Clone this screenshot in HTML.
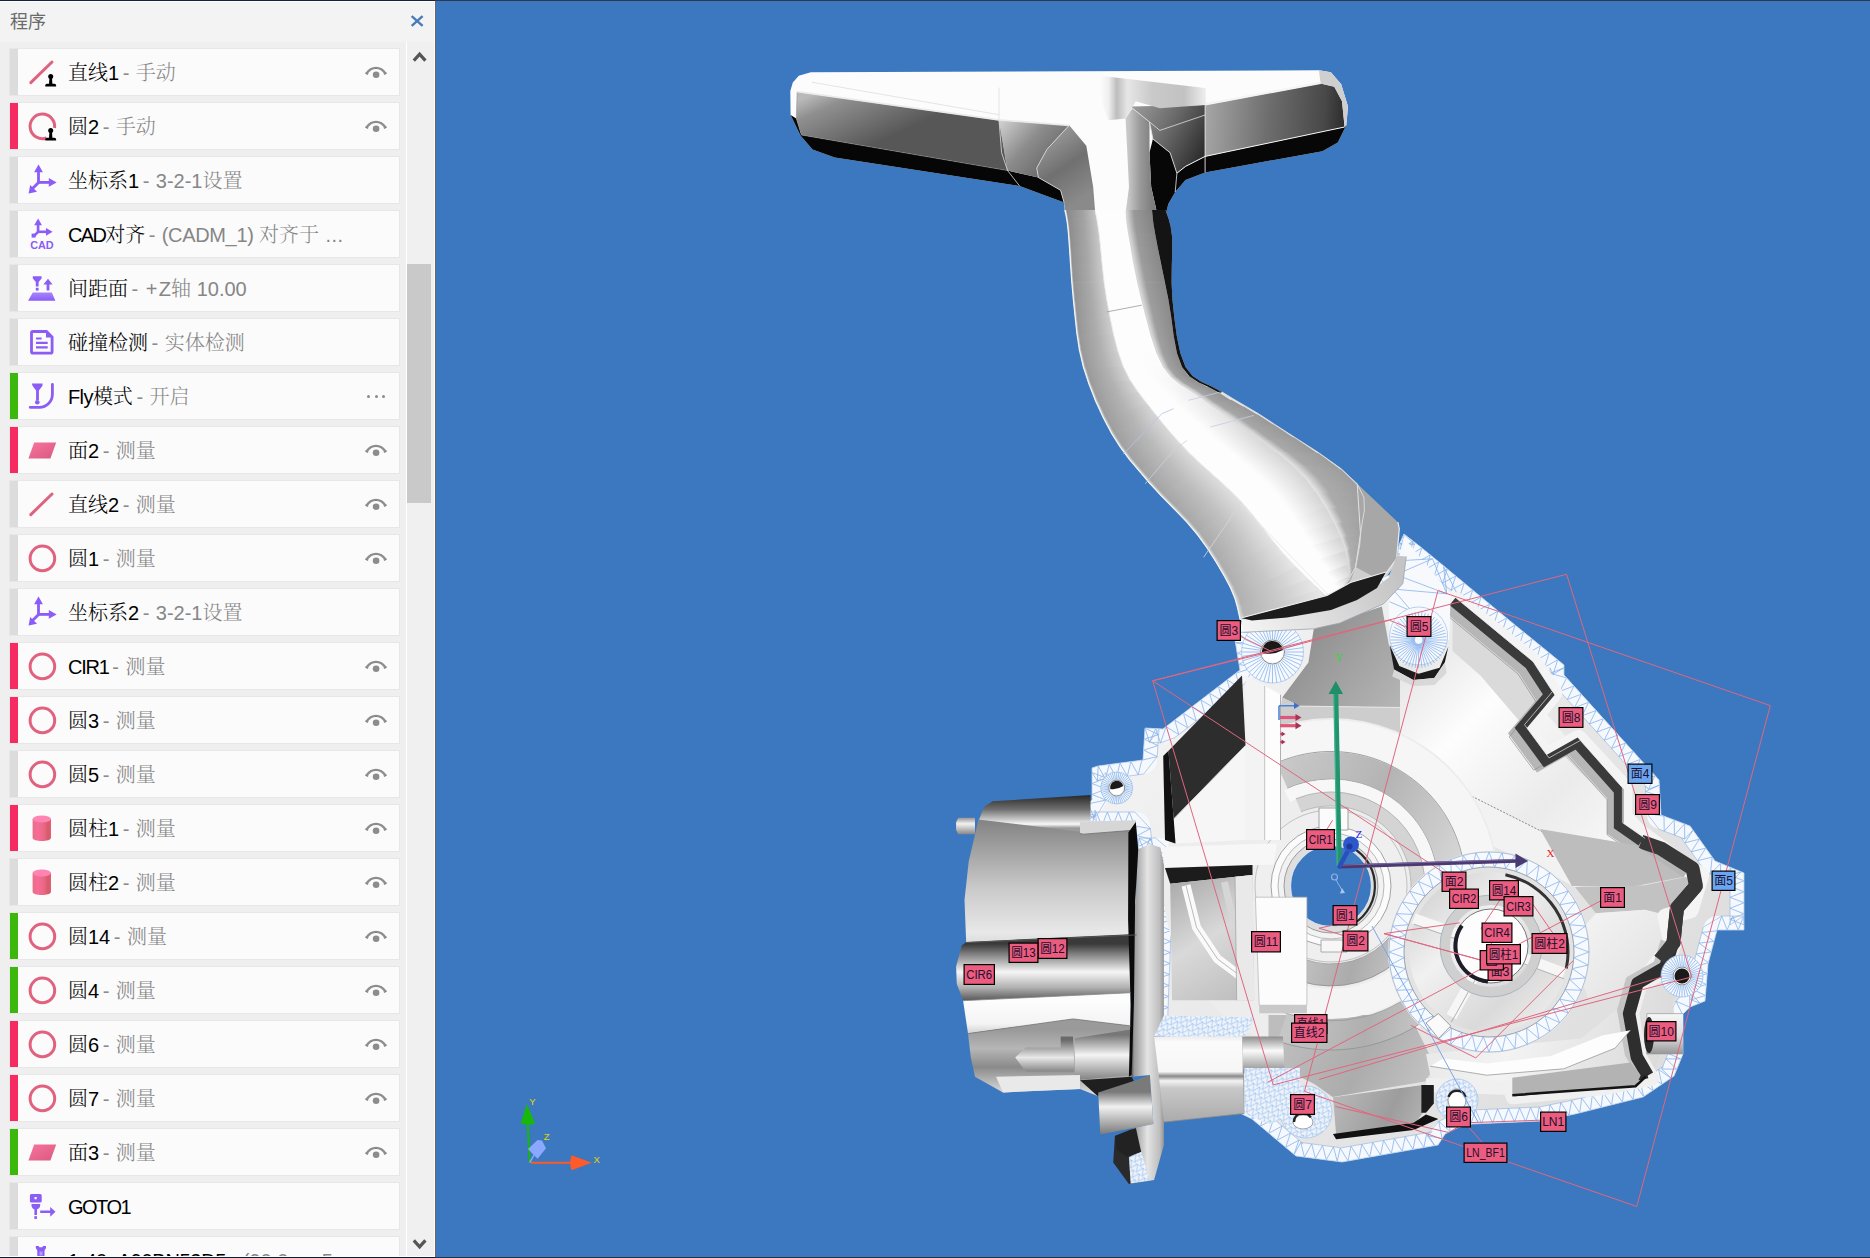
<!DOCTYPE html>
<html lang="zh-CN"><head><meta charset="utf-8"><title>程序</title>
<style>
html,body{margin:0;padding:0}
body{width:1870px;height:1258px;overflow:hidden;position:relative;background:#3b78bf;font-family:"Liberation Sans","Noto Serif CJK SC",sans-serif}
#panel{position:absolute;left:0;top:0;width:435px;height:1258px;background:#efefef;overflow:hidden}
#hdr{position:absolute;left:0;top:0;width:435px;height:42px;background:#f3f3f3}
#hdr .ttl{position:absolute;left:10px;top:9px;font:18px/26px "Liberation Sans","Noto Sans CJK SC",sans-serif;color:#6a6a6a;letter-spacing:0}
#sb{position:absolute;left:406px;top:42px;width:29px;height:1216px;background:#f0f0f0;border-left:1px solid #fff;box-sizing:border-box}
#thumb{position:absolute;left:407px;top:264px;width:24px;height:239px;background:#c9c9c9}
.row{position:absolute;left:9px;width:391px;height:48px;box-sizing:border-box;border:1px solid #e7e7e7;background:#fbfbfb}
.row:before{content:"";position:absolute;left:0;top:0;width:8px;height:46px;background:#dcdcdc}
.row.pink:before{background:#f52b61}
.row.green:before{background:#3cb70c}
.row .ic{position:absolute;left:14px;top:5px}
.row .t{position:absolute;left:58px;top:9px;white-space:nowrap;font-size:20px;line-height:30px}
.row .t b{font-weight:300;color:#000}
.row .t u{text-decoration:none;color:#8a8a8a;margin:0 6.5px 0 3.5px}
.row .t i{font-style:normal;color:#868686;font-weight:300}
.row .eye{position:absolute;left:354px;top:16px}
.dots{position:absolute;left:356px;top:22px;width:22px;height:4px}
.dots s{position:absolute;top:0;width:3px;height:3px;border-radius:2px;background:#8a8a8a}
.dots s:nth-child(1){left:1px}.dots s:nth-child(2){left:8.5px}.dots s:nth-child(3){left:16px}
#topline{position:absolute;left:0;top:0;width:435px;height:1px;background:#15223e}
#botline{position:absolute;left:0;top:1257px;width:435px;height:1px;background:#121a30}
#vp{position:absolute;left:435px;top:0;width:1435px;height:1258px}
</style></head><body>
<svg width="0" height="0" style="position:absolute"><defs>
<linearGradient id="g-pl" x1="0" y1="0" x2="1" y2="1"><stop offset="0" stop-color="#fb74a0"/><stop offset="1" stop-color="#d65a7e"/></linearGradient>
<linearGradient id="g-cy" x1="0" y1="0" x2="1" y2="0"><stop offset="0" stop-color="#e87088"/><stop offset=".3" stop-color="#f76c96"/><stop offset=".6" stop-color="#ea6886"/><stop offset=".85" stop-color="#d65a68"/><stop offset="1" stop-color="#e06078"/></linearGradient>
<linearGradient id="g-tr" x1="0" y1="0" x2="0" y2="1"><stop offset="0" stop-color="#a586fa"/><stop offset="1" stop-color="#8b5cf6"/></linearGradient>
<g id="i-stamp" fill="#000"><circle cx="26.7" cy="22.6" r="2.5"/><path d="M25.5 23h2.4l.5 7h-3.4z"/><path d="M21.3 32.6v-1.2q0-1.6 1.6-1.6h7.6q1.6 0 1.6 1.6v1.2z"/></g>
<g id="i-line"><path d="M6.8 28.6L28 8" stroke="#e0627f" stroke-width="3" stroke-linecap="round" fill="none"/></g>
<g id="i-line_m"><path d="M6.8 28.6L28 8" stroke="#e0627f" stroke-width="3" stroke-linecap="round" fill="none"/><use href="#i-stamp"/></g>
<g id="i-circ"><circle cx="18.4" cy="18.4" r="12.3" stroke="#e0627f" stroke-width="3" fill="none"/></g>
<g id="i-circ_m"><path d="M22.5 30A12.3 12.3 0 1 1 30.6 20" stroke="#e0627f" stroke-width="3" fill="none"/><use href="#i-stamp"/></g>
<g id="i-axes" fill="#8b5cf6" stroke="none"><path d="M13.1 9h2.8v11h-2.8z"/><path d="M14.5 2.6l4.4 7.6h-8.8z"/><path d="M14 19h12v2.8H14z"/><path d="M32.6 20.4l-7.8 4.4v-8.8z"/><path d="M13.6 19.4l2 2-7.6 7.6-2-2z"/><path d="M4.6 31.4l1.6-8.4 6.8 6.8z"/></g>
<g id="i-cad" fill="#8b5cf6"><path d="M12.8 8h2.6v9h-2.6z"/><path d="M14.1 2.6l3.9 6.6h-7.8z"/><path d="M13 14.5h10v2.6H13z"/><path d="M28.6 15.8l-6.6 3.9v-7.8z"/><path d="M13.2 15l1.8 1.8-4 4-1.8-1.800z"/><path d="M7.600 17.600h4v4h-4z"/><text x="6.200" y="32.600" font-family="Liberation Sans,sans-serif" font-weight="700" font-size="11.500" textLength="23.500" lengthAdjust="spacingAndGlyphs">CAD</text></g>
<g id="i-clear" fill="#8b5cf6"><path d="M8.800 22.600h19l3.600 8.100h-27.300z" fill="url(#g-tr)"/><path d="M8.800 6.300h8.800v2.200l-3 3.600v4.400h-2.800v-4.400l-3-3.600z"/><rect x="11.800" y="17.800" width="2.800" height="2.800"/><path d="M24 8.800l4.600 5.600h-3.200v6.200h-2.800v-6.200h-3.200z"/></g>
<g id="i-doc" fill="none" stroke="#8b5cf6"><path d="M8.900 7.500h13.600l5.600 5.600v14.700q0 1.400-1.400 1.400H8.900q-1.400 0-1.400-1.400V8.900q0-1.400 1.400-1.400z" stroke-width="2.800"/><path d="M22 7v6.500h6.500z" fill="#8b5cf6" stroke="none"/><path d="M12 14.500h5.600M12 18.900h11.700M12 23.300h11.700" stroke-width="2.200"/></g>
<g id="i-fly" fill="#8b5cf6"><path d="M7.900 5.600h10.600v2.200l-3.600 4.700v9.500h-2.800v-9.500l-3.600-4.700z"/><circle cx="13.300" cy="24.200" r="2.300"/><path d="M28.400 6.500v9.800a13 13 0 0 1-13 13H6.200" fill="none" stroke="#8b5cf6" stroke-width="2.800" stroke-linecap="round"/></g>
<g id="i-plane"><path d="M10.200 10.600l22-.2-5.800 16H4.400z" fill="url(#g-pl)"/></g>
<g id="i-cyl"><path d="M8.600 9v18.700c0 4.400 18.400 4.400 18.400 0V9z" fill="url(#g-cy)"/><ellipse cx="17.800" cy="9" rx="9.200" ry="3.500" fill="#ff84b2"/></g>
<g id="i-goto" fill="#8b5cf6"><path d="M7.400 6h8.800q1.500 0 1.500 1.500v5.600q0 1.500-1.500 1.500H7.400q-1.500 0-1.500-1.500V7.500Q5.900 6 7.400 6zM10.500 9.100v2.200h2.200V9.100z" fill-rule="evenodd"/><path d="M7.500 15.900h8.700v1.600c0 2-2 3.700-3.200 3.700v5.800h-2.600v-5.800c-1.200 0-2.900-1.700-2.900-3.700z"/><rect x="10.300" y="28.200" width="2.700" height="2.700"/><path d="M16.200 22.600h10v-3.700l5.300 4.900-5.300 4.900v-3.700h-10z"/></g>
<g id="i-probe" fill="#8b5cf6"><path d="M11.800 4h3l.6 1.200h3l.6-1.200h3v2l-1.500 2.400V16h-7.200V8.400L11.800 6z"/><rect x="15.500" y="9.500" width="3" height="4" fill="#b79cf9"/></g>
<g id="i-eye"><path d="M2.400 8.600C5.600 3.800 8.800 2.800 12 2.800s6.400 1 9.600 5.800" fill="none" stroke="#8c8c8c" stroke-width="2.300"/><path d="M1.400 8l2.800 1.300M22.600 8l-2.800 1.300" stroke="#8c8c8c" stroke-width="1.500"/><circle cx="12.100" cy="9.700" r="3.300" fill="#8c8c8c"/></g>
</defs></svg>
<div id="panel">
<div id="hdr"><span class="ttl">程序</span>
<svg style="position:absolute;left:409px;top:13px" width="16" height="16" viewBox="0 0 16 16"><path d="M2.700 3.200L13.600 12.800M13.600 3.200L2.700 12.800" stroke="#4a7ab8" stroke-width="2.400" fill="none"/></svg></div>
<div class="row gray" style="top:48px"><svg class="ic" width="36" height="36" viewBox="0 0 36 36"><use href="#i-line_m"/></svg><span class="t"><b>直线1</b><u>-</u><i>手动</i></span><svg class="eye" width="24" height="14" viewBox="0 0 24 14"><use href="#i-eye"/></svg></div>
<div class="row pink" style="top:102px"><svg class="ic" width="36" height="36" viewBox="0 0 36 36"><use href="#i-circ_m"/></svg><span class="t"><b>圆2</b><u>-</u><i>手动</i></span><svg class="eye" width="24" height="14" viewBox="0 0 24 14"><use href="#i-eye"/></svg></div>
<div class="row gray" style="top:156px"><svg class="ic" width="36" height="36" viewBox="0 0 36 36"><use href="#i-axes"/></svg><span class="t"><b>坐标系1</b><u>-</u><i>3-2-1设置</i></span></div>
<div class="row gray" style="top:210px"><svg class="ic" width="36" height="36" viewBox="0 0 36 36"><use href="#i-cad"/></svg><span class="t"><b><span style="letter-spacing:-1.7px">CAD</span>对齐</b><u>-</u><i><span style="letter-spacing:-.35px">(CADM_1)</span> 对齐于 <span style="letter-spacing:.4px;margin-left:1px">...</span></i></span></div>
<div class="row gray" style="top:264px"><svg class="ic" width="36" height="36" viewBox="0 0 36 36"><use href="#i-clear"/></svg><span class="t"><b>间距面</b><u>-</u><i><span style="letter-spacing:1.5px;margin-left:1px">+</span>Z轴 10.00</i></span></div>
<div class="row gray" style="top:318px"><svg class="ic" width="36" height="36" viewBox="0 0 36 36"><use href="#i-doc"/></svg><span class="t"><b>碰撞检测</b><u>-</u><i>实体检测</i></span></div>
<div class="row green" style="top:372px"><svg class="ic" width="36" height="36" viewBox="0 0 36 36"><use href="#i-fly"/></svg><span class="t"><b><span style="letter-spacing:-.6px">Fly</span>模式</b><u>-</u><i>开启</i></span><span class="dots"><s></s><s></s><s></s></span></div>
<div class="row pink" style="top:426px"><svg class="ic" width="36" height="36" viewBox="0 0 36 36"><use href="#i-plane"/></svg><span class="t"><b>面2</b><u>-</u><i>测量</i></span><svg class="eye" width="24" height="14" viewBox="0 0 24 14"><use href="#i-eye"/></svg></div>
<div class="row gray" style="top:480px"><svg class="ic" width="36" height="36" viewBox="0 0 36 36"><use href="#i-line"/></svg><span class="t"><b>直线2</b><u>-</u><i>测量</i></span><svg class="eye" width="24" height="14" viewBox="0 0 24 14"><use href="#i-eye"/></svg></div>
<div class="row gray" style="top:534px"><svg class="ic" width="36" height="36" viewBox="0 0 36 36"><use href="#i-circ"/></svg><span class="t"><b>圆1</b><u>-</u><i>测量</i></span><svg class="eye" width="24" height="14" viewBox="0 0 24 14"><use href="#i-eye"/></svg></div>
<div class="row gray" style="top:588px"><svg class="ic" width="36" height="36" viewBox="0 0 36 36"><use href="#i-axes"/></svg><span class="t"><b>坐标系2</b><u>-</u><i>3-2-1设置</i></span></div>
<div class="row pink" style="top:642px"><svg class="ic" width="36" height="36" viewBox="0 0 36 36"><use href="#i-circ"/></svg><span class="t"><b><span style="letter-spacing:-1.2px">CIR1</span></b><u>-</u><i>测量</i></span><svg class="eye" width="24" height="14" viewBox="0 0 24 14"><use href="#i-eye"/></svg></div>
<div class="row pink" style="top:696px"><svg class="ic" width="36" height="36" viewBox="0 0 36 36"><use href="#i-circ"/></svg><span class="t"><b>圆3</b><u>-</u><i>测量</i></span><svg class="eye" width="24" height="14" viewBox="0 0 24 14"><use href="#i-eye"/></svg></div>
<div class="row gray" style="top:750px"><svg class="ic" width="36" height="36" viewBox="0 0 36 36"><use href="#i-circ"/></svg><span class="t"><b>圆5</b><u>-</u><i>测量</i></span><svg class="eye" width="24" height="14" viewBox="0 0 24 14"><use href="#i-eye"/></svg></div>
<div class="row pink" style="top:804px"><svg class="ic" width="36" height="36" viewBox="0 0 36 36"><use href="#i-cyl"/></svg><span class="t"><b>圆柱1</b><u>-</u><i>测量</i></span><svg class="eye" width="24" height="14" viewBox="0 0 24 14"><use href="#i-eye"/></svg></div>
<div class="row gray" style="top:858px"><svg class="ic" width="36" height="36" viewBox="0 0 36 36"><use href="#i-cyl"/></svg><span class="t"><b>圆柱2</b><u>-</u><i>测量</i></span><svg class="eye" width="24" height="14" viewBox="0 0 24 14"><use href="#i-eye"/></svg></div>
<div class="row green" style="top:912px"><svg class="ic" width="36" height="36" viewBox="0 0 36 36"><use href="#i-circ"/></svg><span class="t"><b>圆14</b><u>-</u><i>测量</i></span><svg class="eye" width="24" height="14" viewBox="0 0 24 14"><use href="#i-eye"/></svg></div>
<div class="row green" style="top:966px"><svg class="ic" width="36" height="36" viewBox="0 0 36 36"><use href="#i-circ"/></svg><span class="t"><b>圆4</b><u>-</u><i>测量</i></span><svg class="eye" width="24" height="14" viewBox="0 0 24 14"><use href="#i-eye"/></svg></div>
<div class="row pink" style="top:1020px"><svg class="ic" width="36" height="36" viewBox="0 0 36 36"><use href="#i-circ"/></svg><span class="t"><b>圆6</b><u>-</u><i>测量</i></span><svg class="eye" width="24" height="14" viewBox="0 0 24 14"><use href="#i-eye"/></svg></div>
<div class="row pink" style="top:1074px"><svg class="ic" width="36" height="36" viewBox="0 0 36 36"><use href="#i-circ"/></svg><span class="t"><b>圆7</b><u>-</u><i>测量</i></span><svg class="eye" width="24" height="14" viewBox="0 0 24 14"><use href="#i-eye"/></svg></div>
<div class="row green" style="top:1128px"><svg class="ic" width="36" height="36" viewBox="0 0 36 36"><use href="#i-plane"/></svg><span class="t"><b>面3</b><u>-</u><i>测量</i></span><svg class="eye" width="24" height="14" viewBox="0 0 24 14"><use href="#i-eye"/></svg></div>
<div class="row gray" style="top:1182px"><svg class="ic" width="36" height="36" viewBox="0 0 36 36"><use href="#i-goto"/></svg><span class="t"><b><span style="letter-spacing:-1.5px">GOTO1</span></b></span></div>
<div class="row gray" style="top:1236px"><svg class="ic" width="36" height="36" viewBox="0 0 36 36"><use href="#i-probe"/></svg><span class="t"><b><span style="letter-spacing:-.3px">1-40_A90BN53D5</span></b><u>-</u><i>(90.0, ... 5</i></span></div><div id="sb"></div><div id="edge1" style="position:absolute;left:434px;top:1px;width:1px;height:1256px;background:#fafafa"></div><div id="thumb"></div>
<svg style="position:absolute;left:412px;top:50px" width="16" height="12" viewBox="0 0 16 12"><path d="M1.800 10.600L7.600 4.200l5.800 6.400" stroke="#555" stroke-width="3.200" fill="none" stroke-linejoin="miter"/></svg>
<svg style="position:absolute;left:412px;top:1239px" width="16" height="12" viewBox="0 0 16 12"><path d="M1.800 1.400L7.600 7.800l5.800-6.400" stroke="#555" stroke-width="3.200" fill="none" stroke-linejoin="miter"/></svg>
</div>
<svg id="vp" viewBox="435 0 1435 1258" font-family="Liberation Sans,Noto Sans CJK SC,sans-serif"><defs><linearGradient id="gLA" gradientUnits="userSpaceOnUse" x1="800" y1="100" x2="830" y2="165"><stop offset="0" stop-color="#b9b9b9"/><stop offset="0.25" stop-color="#8f8f8f"/><stop offset="1" stop-color="#575757"/></linearGradient><linearGradient id="gLC" gradientUnits="userSpaceOnUse" x1="1000" y1="120" x2="1060" y2="175"><stop offset="0" stop-color="#d2d2d2"/><stop offset="0.45" stop-color="#8c8c8c"/><stop offset="1" stop-color="#5c5c5c"/></linearGradient><linearGradient id="gLC2" gradientUnits="userSpaceOnUse" x1="1040" y1="140" x2="1080" y2="200"><stop offset="0" stop-color="#9a9a9a"/><stop offset="0.5" stop-color="#707070"/><stop offset="1" stop-color="#8a8a8a"/></linearGradient><linearGradient id="gRA" gradientUnits="userSpaceOnUse" x1="1205" y1="110" x2="1345" y2="120"><stop offset="0" stop-color="#a6a6a6"/><stop offset="0.45" stop-color="#6e6e6e"/><stop offset="0.85" stop-color="#484848"/><stop offset="1" stop-color="#2c2c2c"/></linearGradient><linearGradient id="gRC" gradientUnits="userSpaceOnUse" x1="1130" y1="110" x2="1205" y2="150"><stop offset="0" stop-color="#9c9c9c"/><stop offset="0.5" stop-color="#6a6a6a"/><stop offset="1" stop-color="#2e2e2e"/></linearGradient><linearGradient id="gRC2" gradientUnits="userSpaceOnUse" x1="1128" y1="0" x2="1152" y2="0"><stop offset="0" stop-color="#c8c8c8"/><stop offset="0.5" stop-color="#9a9a9a"/><stop offset="1" stop-color="#7e7e7e"/></linearGradient><linearGradient id="gCT" gradientUnits="userSpaceOnUse" x1="1100" y1="0" x2="1205" y2="0"><stop offset="0" stop-color="#fcfcfc"/><stop offset="0.08" stop-color="#f0f0f0"/><stop offset="0.16" stop-color="#bdbdbd"/><stop offset="0.26" stop-color="#e6e6e6"/><stop offset="0.5" stop-color="#c9c9c9"/><stop offset="0.8" stop-color="#c2c2c2"/><stop offset="1" stop-color="#ededed"/></linearGradient><linearGradient id="qb1" gradientUnits="userSpaceOnUse" x1="1065.3" y1="211.6" x2="1094.3" y2="206.2"><stop offset="0" stop-color="#e0e0e0"/><stop offset="0.06" stop-color="#8a8a8a"/><stop offset="0.55" stop-color="#a0a0a0"/><stop offset="1" stop-color="#c4c4c4"/></linearGradient><linearGradient id="qb2" gradientUnits="userSpaceOnUse" x1="1066.0" y1="215.2" x2="1095.0" y2="209.6"><stop offset="0" stop-color="#e0e0e0"/><stop offset="0.06" stop-color="#8b8b8b"/><stop offset="0.55" stop-color="#a1a1a1"/><stop offset="1" stop-color="#c5c5c5"/></linearGradient><linearGradient id="qb3" gradientUnits="userSpaceOnUse" x1="1066.9" y1="220.5" x2="1096.4" y2="215.9"><stop offset="0" stop-color="#e0e0e0"/><stop offset="0.06" stop-color="#8d8d8d"/><stop offset="0.55" stop-color="#a3a3a3"/><stop offset="1" stop-color="#c6c6c6"/></linearGradient><linearGradient id="qb4" gradientUnits="userSpaceOnUse" x1="1067.9" y1="228.3" x2="1097.9" y2="225.0"><stop offset="0" stop-color="#e0e0e0"/><stop offset="0.06" stop-color="#8e8e8e"/><stop offset="0.55" stop-color="#a4a4a4"/><stop offset="1" stop-color="#c7c7c7"/></linearGradient><linearGradient id="qb5" gradientUnits="userSpaceOnUse" x1="1068.9" y1="239.8" x2="1099.6" y2="237.5"><stop offset="0" stop-color="#e0e0e0"/><stop offset="0.06" stop-color="#8f8f8f"/><stop offset="0.55" stop-color="#a6a6a6"/><stop offset="1" stop-color="#c9c9c9"/></linearGradient><linearGradient id="qb6" gradientUnits="userSpaceOnUse" x1="1070.0" y1="255.2" x2="1101.2" y2="253.3"><stop offset="0" stop-color="#e0e0e0"/><stop offset="0.06" stop-color="#919191"/><stop offset="0.55" stop-color="#a7a7a7"/><stop offset="1" stop-color="#cacaca"/></linearGradient><linearGradient id="qb7" gradientUnits="userSpaceOnUse" x1="1071.1" y1="273.0" x2="1103.0" y2="270.8"><stop offset="0" stop-color="#e0e0e0"/><stop offset="0.06" stop-color="#929292"/><stop offset="0.55" stop-color="#a9a9a9"/><stop offset="1" stop-color="#cbcbcb"/></linearGradient><linearGradient id="qb8" gradientUnits="userSpaceOnUse" x1="1072.6" y1="291.1" x2="1105.2" y2="288.1"><stop offset="0" stop-color="#e0e0e0"/><stop offset="0.06" stop-color="#939393"/><stop offset="0.55" stop-color="#aaaaaa"/><stop offset="1" stop-color="#cccccc"/></linearGradient><linearGradient id="qb9" gradientUnits="userSpaceOnUse" x1="1074.3" y1="308.4" x2="1108.0" y2="304.9"><stop offset="0" stop-color="#e0e0e0"/><stop offset="0.06" stop-color="#959595"/><stop offset="0.55" stop-color="#ababab"/><stop offset="1" stop-color="#cdcdcd"/></linearGradient><linearGradient id="qb10" gradientUnits="userSpaceOnUse" x1="1076.0" y1="325.1" x2="1111.3" y2="321.3"><stop offset="0" stop-color="#e0e0e0"/><stop offset="0.06" stop-color="#969696"/><stop offset="0.55" stop-color="#adadad"/><stop offset="1" stop-color="#cecece"/></linearGradient><linearGradient id="qb11" gradientUnits="userSpaceOnUse" x1="1078.2" y1="341.9" x2="1114.8" y2="336.3"><stop offset="0" stop-color="#e0e0e0"/><stop offset="0.06" stop-color="#989898"/><stop offset="0.55" stop-color="#aeaeae"/><stop offset="1" stop-color="#d0d0d0"/></linearGradient><linearGradient id="qb12" gradientUnits="userSpaceOnUse" x1="1081.4" y1="358.6" x2="1118.6" y2="350.0"><stop offset="0" stop-color="#e0e0e0"/><stop offset="0.06" stop-color="#999999"/><stop offset="0.55" stop-color="#b0b0b0"/><stop offset="1" stop-color="#d1d1d1"/></linearGradient><linearGradient id="qb13" gradientUnits="userSpaceOnUse" x1="1086.2" y1="375.5" x2="1123.6" y2="363.4"><stop offset="0" stop-color="#e0e0e0"/><stop offset="0.06" stop-color="#9a9a9a"/><stop offset="0.55" stop-color="#b1b1b1"/><stop offset="1" stop-color="#d2d2d2"/></linearGradient><linearGradient id="qb14" gradientUnits="userSpaceOnUse" x1="1092.4" y1="392.8" x2="1130.9" y2="377.6"><stop offset="0" stop-color="#e0e0e0"/><stop offset="0.06" stop-color="#9c9c9c"/><stop offset="0.55" stop-color="#b2b2b2"/><stop offset="1" stop-color="#d3d3d3"/></linearGradient><linearGradient id="qb15" gradientUnits="userSpaceOnUse" x1="1099.7" y1="409.8" x2="1139.6" y2="391.4"><stop offset="0" stop-color="#e0e0e0"/><stop offset="0.06" stop-color="#9d9d9d"/><stop offset="0.55" stop-color="#b4b4b4"/><stop offset="1" stop-color="#d4d4d4"/></linearGradient><linearGradient id="qb16" gradientUnits="userSpaceOnUse" x1="1107.7" y1="426.0" x2="1148.7" y2="404.2"><stop offset="0" stop-color="#e0e0e0"/><stop offset="0.06" stop-color="#9e9e9e"/><stop offset="0.55" stop-color="#b5b5b5"/><stop offset="1" stop-color="#d5d5d5"/></linearGradient><linearGradient id="qb17" gradientUnits="userSpaceOnUse" x1="1116.1" y1="440.6" x2="1156.7" y2="414.8"><stop offset="0" stop-color="#e0e0e0"/><stop offset="0.06" stop-color="#a0a0a0"/><stop offset="0.55" stop-color="#b7b7b7"/><stop offset="1" stop-color="#d7d7d7"/></linearGradient><linearGradient id="qb18" gradientUnits="userSpaceOnUse" x1="1125.2" y1="453.6" x2="1164.0" y2="424.3"><stop offset="0" stop-color="#e0e0e0"/><stop offset="0.06" stop-color="#a1a1a1"/><stop offset="0.55" stop-color="#b8b8b8"/><stop offset="1" stop-color="#d8d8d8"/></linearGradient><linearGradient id="qb19" gradientUnits="userSpaceOnUse" x1="1134.8" y1="465.7" x2="1172.4" y2="434.3"><stop offset="0" stop-color="#e0e0e0"/><stop offset="0.06" stop-color="#a2a2a2"/><stop offset="0.55" stop-color="#bababa"/><stop offset="1" stop-color="#d9d9d9"/></linearGradient><linearGradient id="qb20" gradientUnits="userSpaceOnUse" x1="1145.0" y1="477.7" x2="1182.6" y2="445.4"><stop offset="0" stop-color="#e0e0e0"/><stop offset="0.06" stop-color="#a4a4a4"/><stop offset="0.55" stop-color="#bbbbbb"/><stop offset="1" stop-color="#dadada"/></linearGradient><linearGradient id="qb21" gradientUnits="userSpaceOnUse" x1="1155.9" y1="490.0" x2="1193.0" y2="456.0"><stop offset="0" stop-color="#e0e0e0"/><stop offset="0.06" stop-color="#a5a5a5"/><stop offset="0.55" stop-color="#bcbcbc"/><stop offset="1" stop-color="#dbdbdb"/></linearGradient><linearGradient id="qb22" gradientUnits="userSpaceOnUse" x1="1167.7" y1="502.4" x2="1204.2" y2="466.4"><stop offset="0" stop-color="#e0e0e0"/><stop offset="0.06" stop-color="#a6a6a6"/><stop offset="0.55" stop-color="#bebebe"/><stop offset="1" stop-color="#dcdcdc"/></linearGradient><linearGradient id="qb23" gradientUnits="userSpaceOnUse" x1="1179.9" y1="514.9" x2="1217.6" y2="478.4"><stop offset="0" stop-color="#e0e0e0"/><stop offset="0.06" stop-color="#a8a8a8"/><stop offset="0.55" stop-color="#bfbfbf"/><stop offset="1" stop-color="#dedede"/></linearGradient><linearGradient id="qb24" gradientUnits="userSpaceOnUse" x1="1191.5" y1="527.5" x2="1232.4" y2="492.4"><stop offset="0" stop-color="#e0e0e0"/><stop offset="0.06" stop-color="#a9a9a9"/><stop offset="0.55" stop-color="#c1c1c1"/><stop offset="1" stop-color="#dfdfdf"/></linearGradient><linearGradient id="qb25" gradientUnits="userSpaceOnUse" x1="1201.8" y1="540.7" x2="1246.8" y2="508.2"><stop offset="0" stop-color="#e0e0e0"/><stop offset="0.06" stop-color="#ababab"/><stop offset="0.55" stop-color="#c2c2c2"/><stop offset="1" stop-color="#e0e0e0"/></linearGradient><linearGradient id="qb26" gradientUnits="userSpaceOnUse" x1="1211.3" y1="554.6" x2="1259.1" y2="523.8"><stop offset="0" stop-color="#e0e0e0"/><stop offset="0.06" stop-color="#acacac"/><stop offset="0.55" stop-color="#c3c3c3"/><stop offset="1" stop-color="#e1e1e1"/></linearGradient><linearGradient id="qb27" gradientUnits="userSpaceOnUse" x1="1219.9" y1="568.5" x2="1270.4" y2="538.9"><stop offset="0" stop-color="#e0e0e0"/><stop offset="0.06" stop-color="#adadad"/><stop offset="0.55" stop-color="#c5c5c5"/><stop offset="1" stop-color="#e2e2e2"/></linearGradient><linearGradient id="qb28" gradientUnits="userSpaceOnUse" x1="1227.1" y1="581.3" x2="1281.1" y2="552.5"><stop offset="0" stop-color="#e0e0e0"/><stop offset="0.06" stop-color="#afafaf"/><stop offset="0.55" stop-color="#c6c6c6"/><stop offset="1" stop-color="#e3e3e3"/></linearGradient><linearGradient id="qb29" gradientUnits="userSpaceOnUse" x1="1232.5" y1="592.5" x2="1292.6" y2="567.2"><stop offset="0" stop-color="#e0e0e0"/><stop offset="0.06" stop-color="#b0b0b0"/><stop offset="0.55" stop-color="#c8c8c8"/><stop offset="1" stop-color="#e5e5e5"/></linearGradient><linearGradient id="qb30" gradientUnits="userSpaceOnUse" x1="1236.1" y1="602.4" x2="1304.7" y2="582.3"><stop offset="0" stop-color="#e0e0e0"/><stop offset="0.06" stop-color="#b1b1b1"/><stop offset="0.55" stop-color="#c9c9c9"/><stop offset="1" stop-color="#e6e6e6"/></linearGradient><linearGradient id="qb31" gradientUnits="userSpaceOnUse" x1="1238.2" y1="610.8" x2="1315.8" y2="593.8"><stop offset="0" stop-color="#e0e0e0"/><stop offset="0.06" stop-color="#b3b3b3"/><stop offset="0.55" stop-color="#cbcbcb"/><stop offset="1" stop-color="#e7e7e7"/></linearGradient><linearGradient id="qb32" gradientUnits="userSpaceOnUse" x1="1239.7" y1="617.3" x2="1324.2" y2="597.7"><stop offset="0" stop-color="#e0e0e0"/><stop offset="0.06" stop-color="#b4b4b4"/><stop offset="0.55" stop-color="#cccccc"/><stop offset="1" stop-color="#e8e8e8"/></linearGradient><linearGradient id="qb33" gradientUnits="userSpaceOnUse" x1="1095.3" y1="211.6" x2="1124.9" y2="205.5"><stop offset="0" stop-color="#fdfdfd"/><stop offset="0.5" stop-color="#fdfdfd"/><stop offset="1" stop-color="#fdfdfd"/></linearGradient><linearGradient id="qb34" gradientUnits="userSpaceOnUse" x1="1096.1" y1="215.2" x2="1125.0" y2="209.1"><stop offset="0" stop-color="#fdfdfd"/><stop offset="0.5" stop-color="#fdfdfd"/><stop offset="1" stop-color="#fdfdfd"/></linearGradient><linearGradient id="qb35" gradientUnits="userSpaceOnUse" x1="1097.1" y1="220.5" x2="1125.8" y2="215.3"><stop offset="0" stop-color="#fdfdfd"/><stop offset="0.5" stop-color="#fdfdfd"/><stop offset="1" stop-color="#fdfdfd"/></linearGradient><linearGradient id="qb36" gradientUnits="userSpaceOnUse" x1="1098.3" y1="228.3" x2="1127.2" y2="224.1"><stop offset="0" stop-color="#fdfdfd"/><stop offset="0.5" stop-color="#fdfdfd"/><stop offset="1" stop-color="#fdfdfd"/></linearGradient><linearGradient id="qb37" gradientUnits="userSpaceOnUse" x1="1099.7" y1="239.8" x2="1129.3" y2="236.6"><stop offset="0" stop-color="#fdfdfd"/><stop offset="0.5" stop-color="#fdfdfd"/><stop offset="1" stop-color="#fdfdfd"/></linearGradient><linearGradient id="qb38" gradientUnits="userSpaceOnUse" x1="1101.3" y1="255.2" x2="1132.1" y2="252.3"><stop offset="0" stop-color="#fdfdfd"/><stop offset="0.5" stop-color="#fdfdfd"/><stop offset="1" stop-color="#fdfdfd"/></linearGradient><linearGradient id="qb39" gradientUnits="userSpaceOnUse" x1="1103.1" y1="273.0" x2="1135.4" y2="269.4"><stop offset="0" stop-color="#fdfdfd"/><stop offset="0.5" stop-color="#fdfdfd"/><stop offset="1" stop-color="#fdfdfd"/></linearGradient><linearGradient id="qb40" gradientUnits="userSpaceOnUse" x1="1105.5" y1="291.1" x2="1139.0" y2="286.1"><stop offset="0" stop-color="#fdfdfd"/><stop offset="0.5" stop-color="#fdfdfd"/><stop offset="1" stop-color="#fdfdfd"/></linearGradient><linearGradient id="qb41" gradientUnits="userSpaceOnUse" x1="1108.4" y1="308.6" x2="1142.8" y2="302.2"><stop offset="0" stop-color="#fdfdfd"/><stop offset="0.5" stop-color="#fdfdfd"/><stop offset="1" stop-color="#fdfdfd"/></linearGradient><linearGradient id="qb42" gradientUnits="userSpaceOnUse" x1="1111.8" y1="326.0" x2="1147.1" y2="318.7"><stop offset="0" stop-color="#fdfdfd"/><stop offset="0.5" stop-color="#fdfdfd"/><stop offset="1" stop-color="#fdfdfd"/></linearGradient><linearGradient id="qb43" gradientUnits="userSpaceOnUse" x1="1115.9" y1="343.2" x2="1151.3" y2="334.0"><stop offset="0" stop-color="#fdfdfd"/><stop offset="0.5" stop-color="#fdfdfd"/><stop offset="1" stop-color="#fdfdfd"/></linearGradient><linearGradient id="qb44" gradientUnits="userSpaceOnUse" x1="1120.8" y1="359.3" x2="1155.6" y2="347.0"><stop offset="0" stop-color="#fdfdfd"/><stop offset="0.5" stop-color="#fdfdfd"/><stop offset="1" stop-color="#fcfcfc"/></linearGradient><linearGradient id="qb45" gradientUnits="userSpaceOnUse" x1="1126.9" y1="373.6" x2="1159.7" y2="356.8"><stop offset="0" stop-color="#fdfdfd"/><stop offset="0.5" stop-color="#fdfdfd"/><stop offset="1" stop-color="#f9f9f9"/></linearGradient><linearGradient id="qb46" gradientUnits="userSpaceOnUse" x1="1134.2" y1="386.1" x2="1165.5" y2="365.1"><stop offset="0" stop-color="#fdfdfd"/><stop offset="0.5" stop-color="#fdfdfd"/><stop offset="1" stop-color="#f5f5f5"/></linearGradient><linearGradient id="qb47" gradientUnits="userSpaceOnUse" x1="1142.4" y1="397.5" x2="1174.1" y2="372.9"><stop offset="0" stop-color="#fdfdfd"/><stop offset="0.5" stop-color="#fdfdfd"/><stop offset="1" stop-color="#f1f1f1"/></linearGradient><linearGradient id="qb48" gradientUnits="userSpaceOnUse" x1="1150.9" y1="408.3" x2="1185.3" y2="381.1"><stop offset="0" stop-color="#fdfdfd"/><stop offset="0.5" stop-color="#fdfdfd"/><stop offset="1" stop-color="#ededed"/></linearGradient><linearGradient id="qb49" gradientUnits="userSpaceOnUse" x1="1159.3" y1="418.9" x2="1196.5" y2="389.4"><stop offset="0" stop-color="#fdfdfd"/><stop offset="0.5" stop-color="#fdfdfd"/><stop offset="1" stop-color="#eaeaea"/></linearGradient><linearGradient id="qb50" gradientUnits="userSpaceOnUse" x1="1167.5" y1="428.9" x2="1206.1" y2="396.2"><stop offset="0" stop-color="#fdfdfd"/><stop offset="0.5" stop-color="#fdfdfd"/><stop offset="1" stop-color="#e6e6e6"/></linearGradient><linearGradient id="qb51" gradientUnits="userSpaceOnUse" x1="1176.0" y1="438.6" x2="1215.6" y2="402.7"><stop offset="0" stop-color="#fdfdfd"/><stop offset="0.5" stop-color="#fdfdfd"/><stop offset="1" stop-color="#e2e2e2"/></linearGradient><linearGradient id="qb52" gradientUnits="userSpaceOnUse" x1="1185.3" y1="448.6" x2="1225.6" y2="410.0"><stop offset="0" stop-color="#fdfdfd"/><stop offset="0.5" stop-color="#fdfdfd"/><stop offset="1" stop-color="#dedede"/></linearGradient><linearGradient id="qb53" gradientUnits="userSpaceOnUse" x1="1196.1" y1="459.3" x2="1235.4" y2="417.9"><stop offset="0" stop-color="#fdfdfd"/><stop offset="0.5" stop-color="#fdfdfd"/><stop offset="1" stop-color="#dadada"/></linearGradient><linearGradient id="qb54" gradientUnits="userSpaceOnUse" x1="1208.3" y1="470.6" x2="1246.9" y2="427.2"><stop offset="0" stop-color="#fdfdfd"/><stop offset="0.5" stop-color="#fdfdfd"/><stop offset="1" stop-color="#d7d7d7"/></linearGradient><linearGradient id="qb55" gradientUnits="userSpaceOnUse" x1="1221.4" y1="482.2" x2="1261.2" y2="438.1"><stop offset="0" stop-color="#fdfdfd"/><stop offset="0.5" stop-color="#fdfdfd"/><stop offset="1" stop-color="#d6d6d6"/></linearGradient><linearGradient id="qb56" gradientUnits="userSpaceOnUse" x1="1234.1" y1="494.3" x2="1277.3" y2="450.8"><stop offset="0" stop-color="#fdfdfd"/><stop offset="0.5" stop-color="#fdfdfd"/><stop offset="1" stop-color="#d6d6d6"/></linearGradient><linearGradient id="qb57" gradientUnits="userSpaceOnUse" x1="1246.0" y1="507.1" x2="1293.6" y2="466.0"><stop offset="0" stop-color="#fdfdfd"/><stop offset="0.5" stop-color="#fdfdfd"/><stop offset="1" stop-color="#d6d6d6"/></linearGradient><linearGradient id="qb58" gradientUnits="userSpaceOnUse" x1="1257.1" y1="520.5" x2="1306.4" y2="481.9"><stop offset="0" stop-color="#fdfdfd"/><stop offset="0.5" stop-color="#fdfdfd"/><stop offset="1" stop-color="#d6d6d6"/></linearGradient><linearGradient id="qb59" gradientUnits="userSpaceOnUse" x1="1267.7" y1="534.3" x2="1315.6" y2="497.2"><stop offset="0" stop-color="#fdfdfd"/><stop offset="0.5" stop-color="#fdfdfd"/><stop offset="1" stop-color="#d6d6d6"/></linearGradient><linearGradient id="qb60" gradientUnits="userSpaceOnUse" x1="1278.4" y1="547.5" x2="1321.6" y2="511.5"><stop offset="0" stop-color="#fdfdfd"/><stop offset="0.5" stop-color="#fdfdfd"/><stop offset="1" stop-color="#d6d6d6"/></linearGradient><linearGradient id="qb61" gradientUnits="userSpaceOnUse" x1="1289.7" y1="560.2" x2="1325.8" y2="526.1"><stop offset="0" stop-color="#fdfdfd"/><stop offset="0.5" stop-color="#fdfdfd"/><stop offset="1" stop-color="#d6d6d6"/></linearGradient><linearGradient id="qb62" gradientUnits="userSpaceOnUse" x1="1301.9" y1="572.7" x2="1331.6" y2="542.9"><stop offset="0" stop-color="#fdfdfd"/><stop offset="0.5" stop-color="#fdfdfd"/><stop offset="1" stop-color="#d6d6d6"/></linearGradient><linearGradient id="qb63" gradientUnits="userSpaceOnUse" x1="1313.8" y1="584.4" x2="1337.7" y2="559.6"><stop offset="0" stop-color="#fdfdfd"/><stop offset="0.5" stop-color="#fdfdfd"/><stop offset="1" stop-color="#d6d6d6"/></linearGradient><linearGradient id="qb64" gradientUnits="userSpaceOnUse" x1="1323.2" y1="593.5" x2="1343.0" y2="573.2"><stop offset="0" stop-color="#fdfdfd"/><stop offset="0.5" stop-color="#fdfdfd"/><stop offset="1" stop-color="#d6d6d6"/></linearGradient><linearGradient id="qb65" gradientUnits="userSpaceOnUse" x1="1126.1" y1="211.6" x2="1152.0" y2="209.9"><stop offset="0" stop-color="#d8d8d8"/><stop offset="0.3" stop-color="#989898"/><stop offset="1" stop-color="#828282"/></linearGradient><linearGradient id="qb66" gradientUnits="userSpaceOnUse" x1="1126.3" y1="215.2" x2="1152.4" y2="213.8"><stop offset="0" stop-color="#d9d9d9"/><stop offset="0.3" stop-color="#999999"/><stop offset="1" stop-color="#838383"/></linearGradient><linearGradient id="qb67" gradientUnits="userSpaceOnUse" x1="1126.7" y1="220.5" x2="1152.8" y2="217.8"><stop offset="0" stop-color="#d9d9d9"/><stop offset="0.3" stop-color="#9a9a9a"/><stop offset="1" stop-color="#848484"/></linearGradient><linearGradient id="qb68" gradientUnits="userSpaceOnUse" x1="1127.8" y1="228.3" x2="1153.6" y2="224.3"><stop offset="0" stop-color="#dadada"/><stop offset="0.3" stop-color="#9a9a9a"/><stop offset="1" stop-color="#858585"/></linearGradient><linearGradient id="qb69" gradientUnits="userSpaceOnUse" x1="1129.7" y1="239.8" x2="1155.5" y2="235.3"><stop offset="0" stop-color="#dbdbdb"/><stop offset="0.3" stop-color="#9b9b9b"/><stop offset="1" stop-color="#878787"/></linearGradient><linearGradient id="qb70" gradientUnits="userSpaceOnUse" x1="1132.4" y1="255.2" x2="1158.5" y2="250.5"><stop offset="0" stop-color="#dcdcdc"/><stop offset="0.3" stop-color="#9c9c9c"/><stop offset="1" stop-color="#888888"/></linearGradient><linearGradient id="qb71" gradientUnits="userSpaceOnUse" x1="1135.8" y1="273.0" x2="1161.9" y2="267.8"><stop offset="0" stop-color="#dcdcdc"/><stop offset="0.3" stop-color="#9d9d9d"/><stop offset="1" stop-color="#898989"/></linearGradient><linearGradient id="qb72" gradientUnits="userSpaceOnUse" x1="1139.7" y1="291.1" x2="1165.3" y2="285.1"><stop offset="0" stop-color="#dddddd"/><stop offset="0.3" stop-color="#9d9d9d"/><stop offset="1" stop-color="#8a8a8a"/></linearGradient><linearGradient id="qb73" gradientUnits="userSpaceOnUse" x1="1144.0" y1="308.8" x2="1168.3" y2="302.6"><stop offset="0" stop-color="#dedede"/><stop offset="0.3" stop-color="#9e9e9e"/><stop offset="1" stop-color="#8b8b8b"/></linearGradient><linearGradient id="qb74" gradientUnits="userSpaceOnUse" x1="1148.7" y1="326.7" x2="1170.9" y2="320.8"><stop offset="0" stop-color="#dedede"/><stop offset="0.3" stop-color="#9f9f9f"/><stop offset="1" stop-color="#8c8c8c"/></linearGradient><linearGradient id="qb75" gradientUnits="userSpaceOnUse" x1="1154.0" y1="344.3" x2="1173.2" y2="338.0"><stop offset="0" stop-color="#dfdfdf"/><stop offset="0.3" stop-color="#a0a0a0"/><stop offset="1" stop-color="#8e8e8e"/></linearGradient><linearGradient id="qb76" gradientUnits="userSpaceOnUse" x1="1160.2" y1="359.9" x2="1175.9" y2="352.5"><stop offset="0" stop-color="#e0e0e0"/><stop offset="0.3" stop-color="#a1a1a1"/><stop offset="1" stop-color="#8f8f8f"/></linearGradient><linearGradient id="qb77" gradientUnits="userSpaceOnUse" x1="1167.4" y1="372.0" x2="1178.9" y2="363.0"><stop offset="0" stop-color="#e1e1e1"/><stop offset="0.3" stop-color="#a1a1a1"/><stop offset="1" stop-color="#909090"/></linearGradient><linearGradient id="qb78" gradientUnits="userSpaceOnUse" x1="1175.9" y1="380.6" x2="1183.4" y2="371.0"><stop offset="0" stop-color="#e1e1e1"/><stop offset="0.3" stop-color="#a2a2a2"/><stop offset="1" stop-color="#919191"/></linearGradient><linearGradient id="qb79" gradientUnits="userSpaceOnUse" x1="1185.2" y1="387.1" x2="1191.3" y2="377.2"><stop offset="0" stop-color="#e2e2e2"/><stop offset="0.3" stop-color="#a3a3a3"/><stop offset="1" stop-color="#929292"/></linearGradient><linearGradient id="qb80" gradientUnits="userSpaceOnUse" x1="1195.1" y1="393.6" x2="1202.6" y2="382.4"><stop offset="0" stop-color="#e3e3e3"/><stop offset="0.3" stop-color="#a4a4a4"/><stop offset="1" stop-color="#939393"/></linearGradient><linearGradient id="qb81" gradientUnits="userSpaceOnUse" x1="1205.6" y1="400.9" x2="1214.6" y2="388.5"><stop offset="0" stop-color="#e3e3e3"/><stop offset="0.3" stop-color="#a4a4a4"/><stop offset="1" stop-color="#959595"/></linearGradient><linearGradient id="qb82" gradientUnits="userSpaceOnUse" x1="1216.7" y1="408.7" x2="1226.0" y2="395.2"><stop offset="0" stop-color="#e4e4e4"/><stop offset="0.3" stop-color="#a5a5a5"/><stop offset="1" stop-color="#969696"/></linearGradient><linearGradient id="qb83" gradientUnits="userSpaceOnUse" x1="1228.4" y1="416.8" x2="1238.7" y2="402.0"><stop offset="0" stop-color="#e5e5e5"/><stop offset="0.3" stop-color="#a6a6a6"/><stop offset="1" stop-color="#979797"/></linearGradient><linearGradient id="qb84" gradientUnits="userSpaceOnUse" x1="1240.7" y1="425.7" x2="1252.6" y2="409.6"><stop offset="0" stop-color="#e5e5e5"/><stop offset="0.3" stop-color="#a7a7a7"/><stop offset="1" stop-color="#989898"/></linearGradient><linearGradient id="qb85" gradientUnits="userSpaceOnUse" x1="1254.0" y1="435.6" x2="1267.0" y2="418.2"><stop offset="0" stop-color="#e6e6e6"/><stop offset="0.3" stop-color="#a7a7a7"/><stop offset="1" stop-color="#999999"/></linearGradient><linearGradient id="qb86" gradientUnits="userSpaceOnUse" x1="1268.5" y1="446.5" x2="1282.6" y2="427.6"><stop offset="0" stop-color="#e7e7e7"/><stop offset="0.3" stop-color="#a8a8a8"/><stop offset="1" stop-color="#9a9a9a"/></linearGradient><linearGradient id="qb87" gradientUnits="userSpaceOnUse" x1="1283.4" y1="458.1" x2="1300.5" y2="437.3"><stop offset="0" stop-color="#e8e8e8"/><stop offset="0.3" stop-color="#a9a9a9"/><stop offset="1" stop-color="#9c9c9c"/></linearGradient><linearGradient id="qb88" gradientUnits="userSpaceOnUse" x1="1297.3" y1="470.7" x2="1319.9" y2="447.9"><stop offset="0" stop-color="#e8e8e8"/><stop offset="0.3" stop-color="#aaaaaa"/><stop offset="1" stop-color="#9d9d9d"/></linearGradient><linearGradient id="qb89" gradientUnits="userSpaceOnUse" x1="1309.4" y1="484.3" x2="1337.9" y2="462.1"><stop offset="0" stop-color="#e9e9e9"/><stop offset="0.3" stop-color="#ababab"/><stop offset="1" stop-color="#9e9e9e"/></linearGradient><linearGradient id="qb90" gradientUnits="userSpaceOnUse" x1="1320.0" y1="499.4" x2="1348.9" y2="480.8"><stop offset="0" stop-color="#eaeaea"/><stop offset="0.3" stop-color="#ababab"/><stop offset="1" stop-color="#9f9f9f"/></linearGradient><linearGradient id="qb91" gradientUnits="userSpaceOnUse" x1="1329.4" y1="515.0" x2="1354.6" y2="501.1"><stop offset="0" stop-color="#eaeaea"/><stop offset="0.3" stop-color="#acacac"/><stop offset="1" stop-color="#a0a0a0"/></linearGradient><linearGradient id="qb92" gradientUnits="userSpaceOnUse" x1="1337.1" y1="530.0" x2="1357.5" y2="520.3"><stop offset="0" stop-color="#ebebeb"/><stop offset="0.3" stop-color="#adadad"/><stop offset="1" stop-color="#a1a1a1"/></linearGradient><linearGradient id="qb93" gradientUnits="userSpaceOnUse" x1="1342.8" y1="544.1" x2="1359.9" y2="538.3"><stop offset="0" stop-color="#ececec"/><stop offset="0.3" stop-color="#aeaeae"/><stop offset="1" stop-color="#a3a3a3"/></linearGradient><linearGradient id="qb94" gradientUnits="userSpaceOnUse" x1="1346.5" y1="557.7" x2="1360.2" y2="554.9"><stop offset="0" stop-color="#ededed"/><stop offset="0.3" stop-color="#aeaeae"/><stop offset="1" stop-color="#a4a4a4"/></linearGradient><linearGradient id="qb95" gradientUnits="userSpaceOnUse" x1="1348.6" y1="570.1" x2="1358.9" y2="568.7"><stop offset="0" stop-color="#ededed"/><stop offset="0.3" stop-color="#afafaf"/><stop offset="1" stop-color="#a5a5a5"/></linearGradient><linearGradient id="qb96" gradientUnits="userSpaceOnUse" x1="1349.9" y1="579.9" x2="1358.1" y2="578.7"><stop offset="0" stop-color="#eeeeee"/><stop offset="0.3" stop-color="#b0b0b0"/><stop offset="1" stop-color="#a6a6a6"/></linearGradient><pattern id="tri" width="9" height="9" patternUnits="userSpaceOnUse"><rect width="9" height="9" fill="#f4f7fb"/><path d="M0 9L4.500 0L9 9M0 0H9" stroke="#7fb0ee" stroke-width=".7" fill="none"/></pattern><pattern id="tri2" width="7" height="7" patternUnits="userSpaceOnUse" patternTransform="rotate(35)"><rect width="7" height="7" fill="#eef3fa"/><path d="M0 7L3.500 0L7 7M0 0H7" stroke="#7fb0ee" stroke-width=".6" fill="none"/></pattern><linearGradient id="gBody" gradientUnits="userSpaceOnUse" x1="1200" y1="700" x2="1700" y2="1100"><stop offset="0" stop-color="#f1f1f1"/><stop offset="0.5" stop-color="#e6e6e6"/><stop offset="1" stop-color="#dcdcdc"/></linearGradient><clipPath id="cBody"><path d="M1242.0 622.0 L1235.0 640.0 L1240.0 670.0 L1163.0 729.0 L1145.0 728.0 L1143.0 760.0 L1098.0 766.0 L1092.0 768.0 L1092.0 800.0 L1081.0 811.0 L1083.0 826.0 L1136.0 826.0 L1139.0 852.0 L1160.0 852.0 L1153.0 1036.0 L1164.0 1120.0 L1240.0 1113.0 L1252.0 1119.0 L1296.0 1156.0 L1342.0 1162.0 L1438.0 1145.0 L1445.0 1134.0 L1457.0 1128.0 L1472.0 1124.0 L1541.0 1121.0 L1575.0 1114.0 L1643.0 1097.0 L1674.0 1076.0 L1683.0 1054.0 L1683.0 1014.0 L1690.0 1007.0 L1705.0 1001.0 L1708.0 964.0 L1717.0 930.0 L1744.0 930.0 L1744.0 873.0 L1715.0 861.0 L1690.0 826.0 L1661.0 815.0 L1659.0 780.0 L1564.0 675.0 L1564.0 665.0 L1515.0 625.0 L1475.0 592.0 L1445.0 567.0 L1420.0 546.5 L1404.0 534.0 L1399.0 545.0 L1397.0 560.0 L1390.0 575.0Z"/></clipPath><linearGradient id="gUp" gradientUnits="userSpaceOnUse" x1="1300" y1="640" x2="1400" y2="720"><stop offset="0" stop-color="#8f8f8f"/><stop offset="0.5" stop-color="#a4a4a4"/><stop offset="1" stop-color="#b8b8b8"/></linearGradient><linearGradient id="gUR" gradientUnits="userSpaceOnUse" x1="1420" y1="640" x2="1640" y2="860"><stop offset="0" stop-color="#e4e4e4"/><stop offset="0.3" stop-color="#fdfdfd"/><stop offset="0.65" stop-color="#ebebeb"/><stop offset="1" stop-color="#fbfbfb"/></linearGradient><linearGradient id="gR1" gradientUnits="userSpaceOnUse" x1="1280" y1="760" x2="1460" y2="860"><stop offset="0" stop-color="#c9c9c9"/><stop offset="0.5" stop-color="#b4b4b4"/><stop offset="1" stop-color="#d6d6d6"/></linearGradient><linearGradient id="gFloor" gradientUnits="userSpaceOnUse" x1="1290" y1="1030" x2="1430" y2="1095"><stop offset="0" stop-color="#bdbdbd"/><stop offset="0.5" stop-color="#acacac"/><stop offset="1" stop-color="#c4c4c4"/></linearGradient><linearGradient id="gR2" gradientUnits="userSpaceOnUse" x1="1300" y1="960" x2="1400" y2="990"><stop offset="0" stop-color="#c2c2c2"/><stop offset="0.5" stop-color="#ababab"/><stop offset="1" stop-color="#c8c8c8"/></linearGradient><linearGradient id="gR3" gradientUnits="userSpaceOnUse" x1="1290" y1="1020" x2="1440" y2="1050"><stop offset="0" stop-color="#c6c6c6"/><stop offset="0.5" stop-color="#afafaf"/><stop offset="1" stop-color="#cfcfcf"/></linearGradient><linearGradient id="gPk" gradientUnits="userSpaceOnUse" x1="1170" y1="880" x2="1250" y2="1010"><stop offset="0" stop-color="#a9a9a9"/><stop offset="0.45" stop-color="#d9d9d9"/><stop offset="1" stop-color="#b9b9b9"/></linearGradient><linearGradient id="gLR" gradientUnits="userSpaceOnUse" x1="1400" y1="1000" x2="1680" y2="1100"><stop offset="0" stop-color="#e4e4e4"/><stop offset="0.4" stop-color="#f3f3f3"/><stop offset="1" stop-color="#d5d5d5"/></linearGradient><linearGradient id="gRM" gradientUnits="userSpaceOnUse" x1="1560" y1="900" x2="1660" y2="1000"><stop offset="0" stop-color="#f8f8f8"/><stop offset="1" stop-color="#e0e0e0"/></linearGradient><linearGradient id="gTray" gradientUnits="userSpaceOnUse" x1="1330" y1="1100" x2="1440" y2="1150"><stop offset="0" stop-color="#b9b9b9"/><stop offset="0.5" stop-color="#9d9d9d"/><stop offset="1" stop-color="#c4c4c4"/></linearGradient><linearGradient id="gB10" gradientUnits="userSpaceOnUse" x1="0" y1="1014" x2="0" y2="1056"><stop offset="0" stop-color="#f6f6f6"/><stop offset="0.55" stop-color="#dcdcdc"/><stop offset="1" stop-color="#8e8e8e"/></linearGradient><linearGradient id="gDish" gradientUnits="userSpaceOnUse" x1="1420" y1="880" x2="1560" y2="1030"><stop offset="0" stop-color="#cfcfcf"/><stop offset="0.35" stop-color="#f1f1f1"/><stop offset="0.7" stop-color="#dadada"/><stop offset="1" stop-color="#f4f4f4"/></linearGradient><linearGradient id="gPin" gradientUnits="userSpaceOnUse" x1="0" y1="817" x2="0" y2="834"><stop offset="0" stop-color="#8a8a8a"/><stop offset="0.4" stop-color="#f2f2f2"/><stop offset="1" stop-color="#8a8a8a"/></linearGradient><linearGradient id="gM0" gradientUnits="userSpaceOnUse" x1="0" y1="796" x2="0" y2="828"><stop offset="0" stop-color="#2c2c2c"/><stop offset="0.42" stop-color="#707070"/><stop offset="0.75" stop-color="#cdcdcd"/><stop offset="0.88" stop-color="#f8f8f8"/><stop offset="1" stop-color="#9a9a9a"/></linearGradient><linearGradient id="gM1" gradientUnits="userSpaceOnUse" x1="0" y1="822" x2="0" y2="945"><stop offset="0" stop-color="#858585"/><stop offset="0.2" stop-color="#9e9e9e"/><stop offset="0.55" stop-color="#cbcbcb"/><stop offset="0.9" stop-color="#e8e8e8"/><stop offset="1" stop-color="#dadada"/></linearGradient><linearGradient id="gM2" gradientUnits="userSpaceOnUse" x1="0" y1="944" x2="0" y2="1000"><stop offset="0" stop-color="#3a3a3a"/><stop offset="0.15" stop-color="#747474"/><stop offset="0.5" stop-color="#f6f6f6"/><stop offset="0.78" stop-color="#b0b0b0"/><stop offset="1" stop-color="#5c5c5c"/></linearGradient><linearGradient id="gM3" gradientUnits="userSpaceOnUse" x1="0" y1="1000" x2="0" y2="1034"><stop offset="0" stop-color="#fdfdfd"/><stop offset="0.7" stop-color="#f4f4f4"/><stop offset="1" stop-color="#d0d0d0"/></linearGradient><linearGradient id="gM4" gradientUnits="userSpaceOnUse" x1="0" y1="1030" x2="0" y2="1092"><stop offset="0" stop-color="#9a9a9a"/><stop offset="0.3" stop-color="#b6b6b6"/><stop offset="0.6" stop-color="#8a8a8a"/><stop offset="1" stop-color="#d8d8d8"/></linearGradient><linearGradient id="gM5" gradientUnits="userSpaceOnUse" x1="0" y1="1040" x2="0" y2="1075"><stop offset="0" stop-color="#6a6a6a"/><stop offset="0.5" stop-color="#e8e8e8"/><stop offset="1" stop-color="#6e6e6e"/></linearGradient><linearGradient id="gM6" gradientUnits="userSpaceOnUse" x1="0" y1="1035" x2="0" y2="1085"><stop offset="0" stop-color="#777"/><stop offset="0.4" stop-color="#f4f4f4"/><stop offset="1" stop-color="#6a6a6a"/></linearGradient><linearGradient id="gM7" gradientUnits="userSpaceOnUse" x1="0" y1="1092" x2="0" y2="1134"><stop offset="0" stop-color="#7a7a7a"/><stop offset="0.35" stop-color="#f1f1f1"/><stop offset="1" stop-color="#7c7c7c"/></linearGradient><linearGradient id="gFl" gradientUnits="userSpaceOnUse" x1="1130" y1="0" x2="1165" y2="0"><stop offset="0" stop-color="#2a2a2a"/><stop offset="0.12" stop-color="#9a9a9a"/><stop offset="0.5" stop-color="#e4e4e4"/><stop offset="0.85" stop-color="#bdbdbd"/><stop offset="1" stop-color="#8a8a8a"/></linearGradient><linearGradient id="gSl" gradientUnits="userSpaceOnUse" x1="0" y1="1033" x2="0" y2="1125"><stop offset="0" stop-color="#e4e4e4"/><stop offset="0.1" stop-color="#fbfbfb"/><stop offset="0.42" stop-color="#f6f6f6"/><stop offset="0.47" stop-color="#8a8a8a"/><stop offset="0.52" stop-color="#f4f4f4"/><stop offset="0.6" stop-color="#c8c8c8"/><stop offset="1" stop-color="#a8a8a8"/></linearGradient><linearGradient id="gSh" gradientUnits="userSpaceOnUse" x1="0" y1="1036" x2="0" y2="1073"><stop offset="0" stop-color="#8a8a8a"/><stop offset="0.4" stop-color="#fafafa"/><stop offset="1" stop-color="#8a8a8a"/></linearGradient><linearGradient id="gCol" gradientUnits="userSpaceOnUse" x1="1250" y1="640" x2="1390" y2="560"><stop offset="0" stop-color="#f4f4f4"/><stop offset="0.5" stop-color="#dcdcdc"/><stop offset="1" stop-color="#c4c4c4"/></linearGradient></defs><rect x="435" y="0" width="1435" height="1258" fill="#3b78bf"/>
<g id="handle">
<path d="M810.8 72.2 L798.8 75.7 L792.8 82.5 L790.3 91.1 L790.6 115.0 L800.5 135.6 L812.5 149.6 L834.8 157.5 L1019.6 186.0 L1064.1 202.6 L1065.0 214.0 L1166.0 214.0 L1164.1 221.1 L1168.3 204.0 L1175.2 192.0 L1185.5 180.1 L1205.1 172.4 L1322.4 151.3 L1337.8 142.4 L1346.3 125.3 L1348.0 106.5 L1341.2 84.2 L1330.9 72.2 L1318.9 70.2Z" fill="#fcfcfc" />
<path d="M790.6 115.0 L800.5 135.6 L812.5 149.6 L834.8 157.5 L1019.6 186.0 L1064.1 202.6 L1060.6 190.3 L1038.4 177.5 L1007.6 170.6 L801.4 135.0 L796.3 118.4Z" fill="#060606" />
<path d="M797.1 91.9 L999.0 120.2 L1007.6 170.6 L801.4 135.0 L796.3 118.4Z" fill="url(#gLA)" stroke="#8a8a8a" stroke-width=".5"/>
<path d="M999.0 120.2 L1069.2 125.3 L1047.0 149.3 L1036.7 168.1 L1038.4 177.5 L1007.6 170.6Z" fill="url(#gLC)" />
<path d="M1069.2 125.3 L1086.3 145.8 L1093.2 186.9 L1095.0 210.0 L1065.0 210.0 L1064.1 202.6 L1060.6 190.3 L1038.4 177.5 L1036.7 168.1 L1047.0 149.3Z" fill="url(#gLC2)" />
<path d="M797.1 91.6 L999.0 119.8 L1069.2 125.3" fill="none" stroke="#ebebeb" stroke-width="1.8" />
<path d="M811.7 82.2 L999.0 114.7" fill="none" stroke="#dadada" stroke-width="0.7" />
<path d="M999.0 87.6 L999.0 120.2 L1001.6 152.7 L1007.6 170.6 L1019.6 186.0" fill="none" stroke="#e0e0e0" stroke-width="0.8" />
<path d="M1069.2 125.3 L1047.0 149.3 L1036.7 168.1 L1038.4 177.5 L1060.6 190.3 L1064.1 202.6" fill="none" stroke="#dcdcdc" stroke-width="0.8" />
<path d="M1205.1 156.4 L1344.6 127.0 L1346.3 125.3 L1337.8 142.4 L1322.4 151.3 L1205.1 172.4 L1185.5 180.1 L1175.2 192.0 L1168.3 204.0 L1164.1 221.1 L1158.1 217.7 L1151.2 186.9 L1149.5 152.7 L1152.9 139.0 L1170.1 152.7 L1176.9 173.2 L1185.5 166.4Z" fill="#070707" />
<path d="M1205.1 105.1 L1320.6 83.4 L1334.3 86.8 L1342.0 101.3 L1344.6 127.0 L1205.1 156.4Z" fill="url(#gRA)" />
<path d="M1318.9 70.2 L1330.9 72.2 L1341.2 84.2 L1348.0 106.5 L1346.3 125.3 L1344.6 127.0 L1342.0 101.3 L1334.3 86.8 L1320.6 83.4Z" fill="#cfcfcf" />
<path d="M1205.1 104.4 L1320.6 82.9" fill="none" stroke="#f4f4f4" stroke-width="2.2" />
<path d="M1130.7 106.5 L1205.1 105.1 L1205.1 156.4 L1185.5 166.4 L1176.9 173.2 L1170.1 152.7 L1152.9 139.0 L1149.5 121.9Z" fill="url(#gRC)" />
<path d="M1125.6 118.4 L1132.4 108.2 L1149.5 121.9 L1149.5 152.7 L1151.2 186.9 L1158.1 217.7 L1152.5 210.0 L1126.0 210.0 L1129.0 186.9Z" fill="url(#gRC2)" />
<path d="M1205.1 88.0 L1205.1 172.4" fill="none" stroke="#e6e6e6" stroke-width="0.9" />
<path d="M1132.4 108.2 L1149.5 121.9 L1159.8 130.4 L1205.1 115.0" fill="none" stroke="#e0e0e0" stroke-width="0.8" />
<path d="M1149.5 121.9 L1152.9 139.0 L1170.1 152.7 L1176.9 173.2 L1175.2 192.0" fill="none" stroke="#dfe6ee" stroke-width="0.8" />
<path d="M1176.9 173.2 L1185.5 166.4 L1205.1 156.4 L1344.6 127.0" fill="none" stroke="#f2f2f2" stroke-width="1" />
<path d="M1099.9 75.7 L1205.1 88.0 L1205.1 105.1 L1159.8 108.2 L1135.8 101.3 L1125.6 118.4 L1108.4 120.2 L1101.6 101.3Z" fill="url(#gCT)" />
<path d="M1065.0 210.0 L1065.6 213.1 L1066.4 217.3 L1067.4 223.6 L1068.4 233.0 L1069.4 246.7 L1070.5 263.8 L1071.8 282.2 L1073.4 300.0 L1075.1 316.8 L1076.9 333.5 L1079.5 350.3 L1083.4 367.0 L1089.0 384.1 L1095.8 401.4 L1103.6 418.2 L1111.8 433.7 L1120.5 447.4 L1129.8 459.8 L1139.8 471.7 L1150.2 483.8 L1161.6 496.2 L1173.9 508.6 L1186.0 521.1 L1196.9 533.9 L1206.8 547.5 L1215.9 561.7 L1223.9 575.3 L1230.3 587.3 L1234.7 597.7 L1237.4 607.0 L1239.1 614.6 L1240.3 620.0 L1355.5 567.3 L1356.6 561.7 L1358.2 553.7 L1359.8 544.2 L1360.5 533.9 L1362.2 522.8 L1364.4 510.5 L1363.9 497.4 L1357.2 483.8 L1341.2 468.8 L1318.5 452.6 L1294.2 437.0 L1273.7 423.7 L1258.2 413.6 L1244.9 405.7 L1233.1 398.8 L1222.0 392.0 L1211.2 386.3 L1201.3 381.7 L1192.6 376.0 L1185.5 367.0 L1180.3 353.1 L1176.8 335.9 L1174.3 317.5 L1172.5 300.0 L1171.6 282.9 L1171.8 265.4 L1172.3 249.3 L1172.0 236.0 L1170.6 226.2 L1168.7 219.0 L1166.8 213.8 L1165.5 210.0Z" fill="#e4e4e4" />
<path d="M1065.0 210.0 L1065.6 213.7 L1095.6 213.7 L1095.0 210.0Z" fill="url(#qb1)" />
<path d="M1065.6 213.1 L1066.4 217.9 L1096.5 217.9 L1095.6 213.1Z" fill="url(#qb2)" />
<path d="M1066.4 217.3 L1067.4 224.2 L1097.6 224.2 L1096.5 217.3Z" fill="url(#qb3)" />
<path d="M1067.4 223.6 L1068.4 233.6 L1099.0 233.6 L1097.6 223.6Z" fill="url(#qb4)" />
<path d="M1068.4 233.0 L1069.4 247.3 L1100.5 247.3 L1099.0 233.0Z" fill="url(#qb5)" />
<path d="M1069.4 246.7 L1070.5 264.4 L1102.1 264.4 L1100.5 246.7Z" fill="url(#qb6)" />
<path d="M1070.5 263.8 L1071.8 282.8 L1104.1 282.8 L1102.1 263.8Z" fill="url(#qb7)" />
<path d="M1071.8 282.2 L1073.4 300.6 L1106.8 300.6 L1104.1 282.2Z" fill="url(#qb8)" />
<path d="M1073.4 300.0 L1075.1 317.4 L1110.0 317.8 L1106.8 300.0Z" fill="url(#qb9)" />
<path d="M1075.1 316.8 L1076.9 334.1 L1113.7 335.4 L1110.0 317.2Z" fill="url(#qb10)" />
<path d="M1076.9 333.5 L1079.5 350.9 L1118.1 352.3 L1113.7 334.8Z" fill="url(#qb11)" />
<path d="M1079.5 350.3 L1083.4 367.6 L1123.5 367.6 L1118.1 351.7Z" fill="url(#qb12)" />
<path d="M1083.4 367.0 L1089.0 384.7 L1130.3 380.9 L1123.5 367.0Z" fill="url(#qb13)" />
<path d="M1089.0 384.1 L1095.8 402.0 L1138.2 392.6 L1130.3 380.3Z" fill="url(#qb14)" />
<path d="M1095.8 401.4 L1103.6 418.8 L1146.7 403.6 L1138.2 392.0Z" fill="url(#qb15)" />
<path d="M1103.6 418.2 L1111.8 434.3 L1155.2 414.3 L1146.7 403.0Z" fill="url(#qb16)" />
<path d="M1111.8 433.7 L1120.5 448.0 L1163.4 424.6 L1155.2 413.7Z" fill="url(#qb17)" />
<path d="M1120.5 447.4 L1129.8 460.4 L1171.6 434.3 L1163.4 424.0Z" fill="url(#qb18)" />
<path d="M1129.8 459.8 L1139.8 472.3 L1180.4 444.0 L1171.6 433.7Z" fill="url(#qb19)" />
<path d="M1139.8 471.7 L1150.2 484.4 L1190.3 454.4 L1180.4 443.4Z" fill="url(#qb20)" />
<path d="M1150.2 483.8 L1161.6 496.8 L1201.9 465.4 L1190.3 453.8Z" fill="url(#qb21)" />
<path d="M1161.6 496.2 L1173.9 509.2 L1214.8 476.9 L1201.9 464.8Z" fill="url(#qb22)" />
<path d="M1173.9 508.6 L1186.0 521.7 L1227.9 488.8 L1214.8 476.3Z" fill="url(#qb23)" />
<path d="M1186.0 521.1 L1196.9 534.5 L1240.3 501.1 L1227.9 488.2Z" fill="url(#qb24)" />
<path d="M1196.9 533.9 L1206.8 548.1 L1251.7 514.2 L1240.3 500.5Z" fill="url(#qb25)" />
<path d="M1206.8 547.5 L1215.9 562.3 L1262.5 528.0 L1251.7 513.6Z" fill="url(#qb26)" />
<path d="M1215.9 561.7 L1223.9 575.9 L1273.0 541.7 L1262.5 527.4Z" fill="url(#qb27)" />
<path d="M1223.9 575.3 L1230.3 587.9 L1283.7 554.5 L1273.0 541.1Z" fill="url(#qb28)" />
<path d="M1230.3 587.3 L1234.7 598.3 L1295.6 567.1 L1283.7 553.9Z" fill="url(#qb29)" />
<path d="M1234.7 597.7 L1237.4 607.6 L1308.2 579.6 L1295.6 566.5Z" fill="url(#qb30)" />
<path d="M1237.4 607.0 L1239.1 615.2 L1319.3 590.4 L1308.2 579.0Z" fill="url(#qb31)" />
<path d="M1239.1 614.6 L1240.3 620.6 L1327.1 597.9 L1319.3 589.8Z" fill="url(#qb32)" />
<path d="M1095.0 210.0 L1095.6 213.1 L1096.5 217.3 L1097.6 223.6 L1099.0 233.0 L1100.5 246.7 L1102.1 263.8 L1104.1 282.2 L1106.8 300.0 L1110.0 317.2 L1113.7 334.8 L1118.1 351.7 L1123.5 367.0 L1130.3 380.3 L1138.2 392.0 L1146.7 403.0 L1155.2 413.7 L1163.4 424.0 L1171.6 433.7 L1180.4 443.4 L1190.3 453.8 L1201.9 464.8 L1214.8 476.3 L1227.9 488.2 L1240.3 500.5 L1251.7 513.6 L1262.5 527.4 L1273.0 541.1 L1283.7 553.9 L1295.6 566.5 L1308.2 579.0 L1319.3 589.8 L1327.1 597.3 L1350.5 584.0 L1349.3 575.9 L1347.8 564.4 L1345.1 550.9 L1340.5 537.2 L1333.7 522.8 L1325.1 507.2 L1315.0 491.5 L1303.8 477.1 L1290.8 464.2 L1276.0 452.1 L1261.0 440.8 L1247.0 430.4 L1234.4 421.0 L1222.4 412.6 L1211.0 404.8 L1200.3 397.0 L1190.0 390.1 L1180.3 384.1 L1171.4 377.0 L1163.5 367.0 L1156.8 352.9 L1151.2 335.8 L1146.3 317.6 L1141.8 300.0 L1137.6 282.2 L1133.9 263.8 L1130.9 246.7 L1128.5 233.0 L1127.1 223.6 L1126.4 217.3 L1126.2 213.1 L1126.0 210.0Z" fill="#fdfdfd" />
<path d="M1095.0 210.0 L1095.6 213.7 L1126.2 213.7 L1126.0 210.0Z" fill="url(#qb33)" />
<path d="M1095.6 213.1 L1096.5 217.9 L1126.4 217.9 L1126.2 213.1Z" fill="url(#qb34)" />
<path d="M1096.5 217.3 L1097.6 224.2 L1127.1 224.2 L1126.4 217.3Z" fill="url(#qb35)" />
<path d="M1097.6 223.6 L1099.0 233.6 L1128.5 233.6 L1127.1 223.6Z" fill="url(#qb36)" />
<path d="M1099.0 233.0 L1100.5 247.3 L1130.9 247.3 L1128.5 233.0Z" fill="url(#qb37)" />
<path d="M1100.5 246.7 L1102.1 264.4 L1133.9 264.4 L1130.9 246.7Z" fill="url(#qb38)" />
<path d="M1102.1 263.8 L1104.1 282.8 L1137.6 282.8 L1133.9 263.8Z" fill="url(#qb39)" />
<path d="M1104.1 282.2 L1106.8 300.6 L1141.8 300.6 L1137.6 282.2Z" fill="url(#qb40)" />
<path d="M1106.8 300.0 L1110.0 317.8 L1146.3 318.2 L1141.8 300.0Z" fill="url(#qb41)" />
<path d="M1110.0 317.2 L1113.7 335.4 L1151.2 336.4 L1146.3 317.6Z" fill="url(#qb42)" />
<path d="M1113.7 334.8 L1118.1 352.3 L1156.8 353.5 L1151.2 335.8Z" fill="url(#qb43)" />
<path d="M1118.1 351.7 L1123.5 367.6 L1163.5 367.6 L1156.8 352.9Z" fill="url(#qb44)" />
<path d="M1123.5 367.0 L1130.3 380.9 L1171.4 377.6 L1163.5 367.0Z" fill="url(#qb45)" />
<path d="M1130.3 380.3 L1138.2 392.6 L1180.3 384.7 L1171.4 377.0Z" fill="url(#qb46)" />
<path d="M1138.2 392.0 L1146.7 403.6 L1190.0 390.7 L1180.3 384.1Z" fill="url(#qb47)" />
<path d="M1146.7 403.0 L1155.2 414.3 L1200.3 397.6 L1190.0 390.1Z" fill="url(#qb48)" />
<path d="M1155.2 413.7 L1163.4 424.6 L1211.0 405.4 L1200.3 397.0Z" fill="url(#qb49)" />
<path d="M1163.4 424.0 L1171.6 434.3 L1222.4 413.2 L1211.0 404.8Z" fill="url(#qb50)" />
<path d="M1171.6 433.7 L1180.4 444.0 L1234.4 421.6 L1222.4 412.6Z" fill="url(#qb51)" />
<path d="M1180.4 443.4 L1190.3 454.4 L1247.0 431.0 L1234.4 421.0Z" fill="url(#qb52)" />
<path d="M1190.3 453.8 L1201.9 465.4 L1261.0 441.4 L1247.0 430.4Z" fill="url(#qb53)" />
<path d="M1201.9 464.8 L1214.8 476.9 L1276.0 452.7 L1261.0 440.8Z" fill="url(#qb54)" />
<path d="M1214.8 476.3 L1227.9 488.8 L1290.8 464.8 L1276.0 452.1Z" fill="url(#qb55)" />
<path d="M1227.9 488.2 L1240.3 501.1 L1303.8 477.7 L1290.8 464.2Z" fill="url(#qb56)" />
<path d="M1240.3 500.5 L1251.7 514.2 L1315.0 492.1 L1303.8 477.1Z" fill="url(#qb57)" />
<path d="M1251.7 513.6 L1262.5 528.0 L1325.1 507.8 L1315.0 491.5Z" fill="url(#qb58)" />
<path d="M1262.5 527.4 L1273.0 541.7 L1333.7 523.4 L1325.1 507.2Z" fill="url(#qb59)" />
<path d="M1273.0 541.1 L1283.7 554.5 L1340.5 537.8 L1333.7 522.8Z" fill="url(#qb60)" />
<path d="M1283.7 553.9 L1295.6 567.1 L1345.1 551.5 L1340.5 537.2Z" fill="url(#qb61)" />
<path d="M1295.6 566.5 L1308.2 579.6 L1347.8 565.0 L1345.1 550.9Z" fill="url(#qb62)" />
<path d="M1308.2 579.0 L1319.3 590.4 L1349.3 576.5 L1347.8 564.4Z" fill="url(#qb63)" />
<path d="M1319.3 589.8 L1327.1 597.9 L1350.5 584.6 L1349.3 575.9Z" fill="url(#qb64)" />
<path d="M1126.0 210.0 L1126.2 213.7 L1152.3 213.7 L1152.0 210.0Z" fill="url(#qb65)" />
<path d="M1126.2 213.1 L1126.4 217.9 L1152.7 217.9 L1152.3 213.1Z" fill="url(#qb66)" />
<path d="M1126.4 217.3 L1127.1 224.2 L1153.4 224.2 L1152.7 217.3Z" fill="url(#qb67)" />
<path d="M1127.1 223.6 L1128.5 233.6 L1155.0 233.6 L1153.4 223.6Z" fill="url(#qb68)" />
<path d="M1128.5 233.0 L1130.9 247.3 L1157.6 247.3 L1155.0 233.0Z" fill="url(#qb69)" />
<path d="M1130.9 246.7 L1133.9 264.4 L1161.1 264.4 L1157.6 246.7Z" fill="url(#qb70)" />
<path d="M1133.9 263.8 L1137.6 282.8 L1164.9 282.8 L1161.1 263.8Z" fill="url(#qb71)" />
<path d="M1137.6 282.2 L1141.8 300.6 L1168.5 300.6 L1164.9 282.2Z" fill="url(#qb72)" />
<path d="M1141.8 300.0 L1146.3 318.2 L1171.3 318.3 L1168.5 300.0Z" fill="url(#qb73)" />
<path d="M1146.3 317.6 L1151.2 336.4 L1173.7 336.7 L1171.3 317.7Z" fill="url(#qb74)" />
<path d="M1151.2 335.8 L1156.8 353.5 L1176.9 353.7 L1173.7 336.1Z" fill="url(#qb75)" />
<path d="M1156.8 352.9 L1163.5 367.6 L1182.0 367.6 L1176.9 353.1Z" fill="url(#qb76)" />
<path d="M1163.5 367.0 L1171.4 377.6 L1189.3 376.9 L1182.0 367.0Z" fill="url(#qb77)" />
<path d="M1171.4 377.0 L1180.3 384.7 L1198.3 382.8 L1189.3 376.3Z" fill="url(#qb78)" />
<path d="M1180.3 384.1 L1190.0 390.7 L1208.5 387.7 L1198.3 382.2Z" fill="url(#qb79)" />
<path d="M1190.0 390.1 L1200.3 397.6 L1219.6 393.6 L1208.5 387.1Z" fill="url(#qb80)" />
<path d="M1200.3 397.0 L1211.0 405.4 L1231.3 400.4 L1219.6 393.0Z" fill="url(#qb81)" />
<path d="M1211.0 404.8 L1222.4 413.2 L1243.8 407.1 L1231.3 399.8Z" fill="url(#qb82)" />
<path d="M1222.4 412.6 L1234.4 421.6 L1257.7 415.0 L1243.8 406.5Z" fill="url(#qb83)" />
<path d="M1234.4 421.0 L1247.0 431.0 L1273.7 425.0 L1257.7 414.4Z" fill="url(#qb84)" />
<path d="M1247.0 430.4 L1261.0 441.4 L1294.4 438.2 L1273.7 424.4Z" fill="url(#qb85)" />
<path d="M1261.0 440.8 L1276.0 452.7 L1318.6 453.9 L1294.4 437.6Z" fill="url(#qb86)" />
<path d="M1276.0 452.1 L1290.8 464.8 L1341.3 470.1 L1318.6 453.3Z" fill="url(#qb87)" />
<path d="M1290.8 464.2 L1303.8 477.7 L1357.2 485.1 L1341.3 469.5Z" fill="url(#qb88)" />
<path d="M1303.8 477.1 L1315.0 492.1 L1363.9 498.6 L1357.2 484.5Z" fill="url(#qb89)" />
<path d="M1315.0 491.5 L1325.1 507.8 L1364.4 511.5 L1363.9 498.0Z" fill="url(#qb90)" />
<path d="M1325.1 507.2 L1333.7 523.4 L1362.2 523.5 L1364.4 510.9Z" fill="url(#qb91)" />
<path d="M1333.7 522.8 L1340.5 537.8 L1360.5 534.5 L1362.2 522.9Z" fill="url(#qb92)" />
<path d="M1340.5 537.2 L1345.1 551.5 L1359.8 544.7 L1360.5 533.9Z" fill="url(#qb93)" />
<path d="M1345.1 550.9 L1347.8 565.0 L1358.2 554.3 L1359.8 544.1Z" fill="url(#qb94)" />
<path d="M1347.8 564.4 L1349.3 576.5 L1356.6 562.3 L1358.2 553.7Z" fill="url(#qb95)" />
<path d="M1349.3 575.9 L1350.5 584.6 L1355.5 567.9 L1356.6 561.7Z" fill="url(#qb96)" />
<path d="M1152.0 210.0 L1152.3 213.1 L1152.7 217.3 L1153.4 223.6 L1155.0 233.0 L1157.6 246.7 L1161.1 263.8 L1164.9 282.2 L1168.5 300.0 L1171.3 317.7 L1173.7 336.1 L1176.9 353.1 L1182.0 367.0 L1189.3 376.3 L1198.3 382.2 L1208.5 387.1 L1219.6 393.0 L1222.0 392.0 L1211.2 386.3 L1201.3 381.7 L1192.6 376.0 L1185.5 367.0 L1180.3 353.1 L1176.8 335.9 L1174.3 317.5 L1172.5 300.0 L1171.6 282.9 L1171.8 265.4 L1172.3 249.3 L1172.0 236.0 L1170.6 226.2 L1168.7 219.0 L1166.8 213.8 L1165.5 210.0Z" fill="#141414" />
<path d="M1357.2 483.8 L1397.9 522.2 L1399.3 528.9 L1396.6 558.9 L1393.0 568.0 L1386.0 577.0 L1357.0 591.0 L1338.0 596.0 L1355.5 567.3 L1360.5 533.9Z" fill="#a7a7a7" />
<path d="M1355.5 567.0 L1380.6 580.6 L1396.6 559.0 L1393.0 568.0 L1386.0 577.0 L1357.0 591.0 L1338.0 596.0 L1349.0 585.0Z" fill="#cfcfcf" />
<path d="M1357.2 483.8 L1360.5 533.9 L1355.5 567.3 L1340.5 594.0" fill="none" stroke="#e2e2e2" stroke-width="1" />
<path d="M1397.9 522.2 L1399.3 528.9 L1396.6 558.9 L1380.6 580.6" fill="none" stroke="#ececec" stroke-width="1.2" />
<path d="M1065.0 210.0 L1065.6 213.1 L1066.4 217.3 L1067.4 223.6 L1068.4 233.0 L1069.4 246.7 L1070.5 263.8 L1071.8 282.2 L1073.4 300.0 L1075.1 316.8 L1076.9 333.5 L1079.5 350.3 L1083.4 367.0 L1089.0 384.1 L1095.8 401.4 L1103.6 418.2 L1111.8 433.7 L1120.5 447.4 L1129.8 459.8 L1139.8 471.7 L1150.2 483.8 L1161.6 496.2 L1173.9 508.6 L1186.0 521.1 L1196.9 533.9 L1206.8 547.5 L1215.9 561.7 L1223.9 575.3 L1230.3 587.3 L1234.7 597.7 L1237.4 607.0 L1239.1 614.6 L1240.3 620.0" fill="none" stroke="#f4f4f4" stroke-width="1.2" />
<path d="M1095.0 210.0 L1095.6 213.1 L1096.5 217.3 L1097.6 223.6 L1099.0 233.0 L1100.5 246.7 L1102.1 263.8 L1104.1 282.2 L1106.8 300.0 L1110.0 317.2 L1113.7 334.8 L1118.1 351.7 L1123.5 367.0 L1130.3 380.3 L1138.2 392.0 L1146.7 403.0 L1155.2 413.7 L1163.4 424.0 L1171.6 433.7 L1180.4 443.4 L1190.3 453.8 L1201.9 464.8 L1214.8 476.3 L1227.9 488.2 L1240.3 500.5 L1251.7 513.6 L1262.5 527.4 L1273.0 541.1 L1283.7 553.9 L1295.6 566.5 L1308.2 579.0 L1319.3 589.8 L1327.1 597.3" fill="none" stroke="#e4e4e4" stroke-width="0.8" />
<path d="M1126.0 210.0 L1126.2 213.1 L1126.4 217.3 L1127.1 223.6 L1128.5 233.0 L1130.9 246.7 L1133.9 263.8 L1137.6 282.2 L1141.8 300.0 L1146.3 317.6 L1151.2 335.8 L1156.8 352.9 L1163.5 367.0 L1171.4 377.0 L1180.3 384.1 L1190.0 390.1 L1200.3 397.0 L1211.0 404.8 L1222.4 412.6 L1234.4 421.0 L1247.0 430.4 L1261.0 440.8 L1276.0 452.1 L1290.8 464.2 L1303.8 477.1 L1315.0 491.5 L1325.1 507.2 L1333.7 522.8 L1340.5 537.2 L1345.1 550.9 L1347.8 564.4 L1349.3 575.9 L1350.5 584.0" fill="none" stroke="#cfcfcf" stroke-width="0.8" />
<path d="M1222.0 392.0 L1233.1 398.8 L1244.9 405.7 L1258.2 413.6 L1273.7 423.7 L1294.2 437.0 L1318.5 452.6 L1341.2 468.8 L1357.2 483.8 L1363.9 497.4 L1364.4 510.5 L1362.2 522.8 L1360.5 533.9 L1359.8 544.2 L1358.2 553.7 L1356.6 561.7 L1355.5 567.3" fill="none" stroke="#dedede" stroke-width="0.9" />
<path d="M1106.8 311.9 L1141.8 305.2" fill="none" stroke="#9a9a9a" stroke-width="0.8" />
<path d="M1123.5 453.8 L1161.9 413.7 L1173.6 408.7" fill="none" stroke="#b4c6de" stroke-width="0.8" />
<path d="M1145.2 483.8 L1173.6 450.4 L1186.9 440.4" fill="none" stroke="#c9d3e0" stroke-width="0.8" />
<path d="M1188.6 400.3 L1220.3 392.0" fill="none" stroke="#c4cede" stroke-width="0.8" />
<path d="M1210.3 427.0 L1253.7 415.4" fill="none" stroke="#c4cede" stroke-width="0.8" />
<path d="M1203.6 557.3 L1240.3 503.8" fill="none" stroke="#d8d8d8" stroke-width="0.8" />
<path d="M1240.3 503.8 L1330.5 597.3" fill="none" stroke="#e6e6e6" stroke-width="0.8" />
</g>
<g id="body">
<path d="M1242.0 622.0 L1235.0 640.0 L1240.0 670.0 L1163.0 729.0 L1145.0 728.0 L1143.0 760.0 L1098.0 766.0 L1092.0 768.0 L1092.0 800.0 L1081.0 811.0 L1083.0 826.0 L1136.0 826.0 L1139.0 852.0 L1160.0 852.0 L1153.0 1036.0 L1164.0 1120.0 L1240.0 1113.0 L1252.0 1119.0 L1296.0 1156.0 L1342.0 1162.0 L1438.0 1145.0 L1445.0 1134.0 L1457.0 1128.0 L1472.0 1124.0 L1541.0 1121.0 L1575.0 1114.0 L1643.0 1097.0 L1674.0 1076.0 L1683.0 1054.0 L1683.0 1014.0 L1690.0 1007.0 L1705.0 1001.0 L1708.0 964.0 L1717.0 930.0 L1744.0 930.0 L1744.0 873.0 L1715.0 861.0 L1690.0 826.0 L1661.0 815.0 L1659.0 780.0 L1564.0 675.0 L1564.0 665.0 L1515.0 625.0 L1475.0 592.0 L1445.0 567.0 L1420.0 546.5 L1404.0 534.0 L1399.0 545.0 L1397.0 560.0 L1390.0 575.0Z" fill="url(#gBody)" />
<path d="M1242.0 622.0 L1235.0 640.0 L1240.0 670.0 L1163.0 729.0 L1145.0 728.0 L1143.0 760.0 L1098.0 766.0 L1092.0 768.0 L1092.0 800.0 L1081.0 811.0 L1083.0 826.0 L1136.0 826.0 L1139.0 852.0 L1160.0 852.0 L1153.0 1036.0 L1164.0 1120.0 L1240.0 1113.0 L1252.0 1119.0 L1296.0 1156.0 L1342.0 1162.0 L1438.0 1145.0 L1445.0 1134.0 L1457.0 1128.0 L1472.0 1124.0 L1541.0 1121.0 L1575.0 1114.0 L1643.0 1097.0 L1674.0 1076.0 L1683.0 1054.0 L1683.0 1014.0 L1690.0 1007.0 L1705.0 1001.0 L1708.0 964.0 L1717.0 930.0 L1744.0 930.0 L1744.0 873.0 L1715.0 861.0 L1690.0 826.0 L1661.0 815.0 L1659.0 780.0 L1564.0 675.0 L1564.0 665.0 L1515.0 625.0 L1475.0 592.0 L1445.0 567.0 L1420.0 546.5 L1404.0 534.0 L1399.0 545.0 L1397.0 560.0 L1390.0 575.0Z" fill="none" stroke="#f5f8fc" stroke-width="28" stroke-linejoin="round" clip-path="url(#cBody)"/>
<g clip-path="url(#cBody)">
<path d="M1242.0 622.0 L1253.1 632.2 L1238.0 632.3 L1249.1 642.5 L1235.4 642.7 L1250.2 645.8 L1237.3 653.5 L1252.0 656.6 L1239.1 664.4 L1253.8 667.5 L1235.8 673.2 L1240.0 687.7 L1227.1 679.9 L1231.2 694.4 L1218.4 686.6 L1222.5 701.0 L1209.6 693.3 L1213.8 707.7 L1200.9 700.0 L1205.0 714.4 L1192.2 706.7 L1196.3 721.1 L1183.4 713.3 L1187.6 727.8 L1174.7 720.0 L1178.8 734.5 L1166.0 726.7 L1160.5 742.9 L1155.7 728.6 L1149.5 742.3 L1145.0 728.2 L1158.6 734.6 L1144.3 739.2 L1157.9 745.6 L1143.6 750.2 L1157.2 756.6 L1141.8 760.2 L1138.2 774.8 L1130.9 761.6 L1127.3 776.2 L1120.0 763.1 L1116.4 777.7 L1109.1 764.5 L1105.5 779.1 L1098.2 766.0 L1097.4 781.0 L1092.0 772.5 L1106.0 778.0 L1092.0 783.5 L1106.0 789.0 L1092.0 794.5 L1106.0 800.0 L1088.1 803.9 L1094.2 817.6 L1081.1 811.9 L1095.7 815.5 L1082.6 822.8 L1085.3 812.0 L1090.8 826.0 L1096.3 812.0 L1101.8 826.0 L1107.3 812.0 L1112.8 826.0 L1118.3 812.0 L1123.8 826.0 L1129.3 812.0 L1134.8 826.0 L1150.4 828.6 L1137.1 835.7 L1151.7 839.6 L1138.4 846.6 L1139.1 838.0 L1144.6 852.0 L1150.1 838.0 L1155.6 852.0 L1173.9 853.6 L1159.7 858.6 L1173.5 864.6 L1159.3 869.6 L1173.1 875.6 L1158.9 880.6 L1172.7 886.6 L1158.5 891.6 L1172.3 897.6 L1158.1 902.6 L1171.9 908.6 L1157.7 913.5 L1171.4 919.6 L1157.2 924.5 L1171.0 930.6 L1156.8 935.5 L1170.6 941.6 L1156.4 946.5 L1170.2 952.6 L1156.0 957.5 L1169.8 963.5 L1155.6 968.5 L1169.3 974.5 L1155.1 979.5 L1168.9 985.5 L1154.7 990.5 L1168.5 996.5 L1154.3 1001.5 L1168.1 1007.5 L1153.9 1012.5 L1167.7 1018.5 L1153.5 1023.5 L1167.3 1029.5 L1153.1 1034.5 L1167.4 1038.1 L1154.2 1045.4 L1168.8 1049.0 L1155.7 1056.3 L1170.3 1059.9 L1157.1 1067.2 L1171.7 1070.8 L1158.5 1078.1 L1173.1 1081.7 L1159.9 1089.0 L1174.5 1092.6 L1161.4 1099.9 L1176.0 1103.6 L1162.8 1110.8 L1177.4 1114.5 L1165.7 1119.8 L1169.9 1105.4 L1176.7 1118.8 L1180.9 1104.4 L1187.6 1117.8 L1191.8 1103.4 L1198.6 1116.8 L1202.8 1102.4 L1209.6 1115.8 L1213.7 1101.4 L1220.5 1114.8 L1224.7 1100.4 L1231.5 1113.8 L1235.7 1099.3 L1242.2 1114.1 L1253.3 1104.0 L1252.0 1119.0 L1265.2 1111.8 L1260.4 1126.1 L1273.6 1118.9 L1268.8 1133.2 L1282.1 1126.0 L1277.3 1140.2 L1290.5 1133.1 L1285.7 1147.3 L1298.9 1140.1 L1294.1 1154.4 L1300.8 1142.5 L1304.4 1157.1 L1311.7 1143.9 L1315.4 1158.5 L1322.6 1145.4 L1326.3 1159.9 L1333.5 1146.8 L1337.2 1161.4 L1340.2 1148.1 L1348.0 1160.9 L1351.0 1146.2 L1358.9 1159.0 L1361.8 1144.3 L1369.7 1157.1 L1372.7 1142.4 L1380.5 1155.2 L1383.5 1140.4 L1391.4 1153.3 L1394.3 1138.5 L1402.2 1151.3 L1405.2 1136.6 L1413.0 1149.4 L1416.0 1134.7 L1423.9 1147.5 L1426.8 1132.8 L1434.7 1145.6 L1427.3 1135.7 L1442.1 1138.6 L1438.8 1121.4 L1450.0 1131.5 L1448.7 1116.5 L1460.1 1127.2 L1461.8 1112.2 L1470.7 1124.3 L1475.5 1109.8 L1481.6 1123.6 L1486.5 1109.4 L1492.6 1123.1 L1497.5 1108.9 L1503.6 1122.6 L1508.5 1108.4 L1514.6 1122.1 L1519.5 1107.9 L1525.6 1121.7 L1530.5 1107.4 L1536.6 1121.2 L1539.2 1107.1 L1547.5 1119.7 L1550.0 1104.8 L1558.2 1117.5 L1560.8 1102.6 L1569.0 1115.2 L1571.6 1100.4 L1579.7 1112.8 L1581.7 1097.9 L1590.4 1110.1 L1592.3 1095.2 L1601.1 1107.5 L1603.0 1092.6 L1611.7 1104.8 L1613.7 1089.9 L1622.4 1102.1 L1624.4 1087.2 L1633.1 1099.5 L1635.0 1084.6 L1643.6 1096.6 L1640.3 1081.9 L1652.8 1090.4 L1649.5 1075.7 L1661.9 1084.2 L1658.6 1069.5 L1671.0 1078.1 L1661.7 1069.0 L1676.8 1069.2 L1665.9 1058.8 L1680.9 1059.0 L1669.0 1053.9 L1683.0 1048.4 L1669.0 1042.9 L1683.0 1037.4 L1669.0 1031.9 L1683.0 1026.4 L1669.0 1020.9 L1683.0 1015.4 L1676.0 1001.2 L1689.8 1007.2 L1689.6 992.1 L1699.9 1003.0 L1691.0 999.9 L1705.4 995.5 L1691.9 988.9 L1706.3 984.5 L1692.8 977.9 L1707.2 973.6 L1693.7 967.0 L1708.4 962.7 L1696.2 953.8 L1711.2 952.0 L1699.0 943.1 L1714.0 941.4 L1701.9 932.5 L1716.8 930.8 L1721.7 916.0 L1727.2 930.0 L1732.7 916.0 L1738.2 930.0 L1743.7 916.0 L1744.0 924.8 L1730.0 919.3 L1744.0 913.8 L1730.0 908.3 L1744.0 902.8 L1730.0 897.3 L1744.0 891.8 L1730.0 886.3 L1744.0 880.8 L1730.0 875.3 L1741.0 871.8 L1730.6 882.6 L1730.9 867.6 L1720.4 878.4 L1720.7 863.4 L1710.3 874.2 L1712.2 857.1 L1697.6 860.7 L1705.8 848.1 L1691.2 851.8 L1699.4 839.2 L1684.8 842.8 L1693.0 830.2 L1684.7 839.0 L1684.6 823.9 L1674.4 835.1 L1674.3 820.0 L1664.2 831.2 L1664.0 816.1 L1646.9 813.5 L1660.6 807.2 L1646.3 802.5 L1659.9 796.2 L1645.6 791.5 L1659.3 785.2 L1648.4 789.2 L1655.1 775.7 L1641.1 781.0 L1647.8 767.6 L1633.7 772.9 L1640.4 759.4 L1626.3 764.7 L1633.0 751.3 L1618.9 756.6 L1625.6 743.1 L1611.5 748.4 L1618.2 734.9 L1604.2 740.3 L1610.9 726.8 L1596.8 732.1 L1603.5 718.6 L1589.4 724.0 L1596.1 710.5 L1582.0 715.8 L1588.7 702.3 L1574.6 707.6 L1581.3 694.2 L1567.3 699.5 L1574.0 686.0 L1559.9 691.3 L1566.6 677.9 L1550.0 673.3 L1564.0 667.8 L1553.1 674.2 L1557.7 659.8 L1544.6 667.2 L1549.2 652.9 L1536.0 660.3 L1540.6 645.9 L1527.5 653.3 L1532.1 639.0 L1519.0 646.3 L1523.6 632.0 L1510.5 639.4 L1515.1 625.1 L1501.9 632.4 L1506.6 618.1 L1493.4 625.4 L1498.1 611.1 L1485.0 618.4 L1489.6 604.1 L1476.5 611.4 L1481.1 597.1 L1468.0 604.4 L1472.7 590.1 L1459.5 597.3 L1464.2 583.0 L1451.0 590.2 L1455.8 576.0 L1442.6 583.2 L1447.3 568.9 L1434.2 576.2 L1438.8 561.9 L1425.7 569.3 L1430.3 555.0 L1417.2 562.3 L1421.8 548.0 L1408.9 555.6 L1413.2 541.2 L1400.2 548.8 L1404.5 534.4 L1414.7 544.2 L1399.7 543.4 L1412.4 550.6 L1397.8 554.2 L1410.9 561.5 L1394.8 564.7 L1405.2 575.6 L1390.2 574.6 L1389.4 589.9 L1379.9 578.2 L1378.9 593.2 L1369.4 581.5 L1368.4 596.5 L1358.9 584.9 L1357.9 599.9 L1348.5 588.2 L1347.4 603.2 L1338.0 591.5 L1337.0 606.5 L1327.5 594.9 L1326.5 609.9 L1317.0 598.2 L1316.0 613.2 L1306.5 601.5 L1305.5 616.5 L1296.0 604.8 L1295.0 619.8 L1285.5 608.2 L1284.5 623.2 L1275.1 611.5 L1274.1 626.5 L1264.6 614.8 L1263.6 629.8 L1254.1 618.2 L1253.1 633.2 L1243.6 621.5" fill="none" stroke="#79abec" stroke-width="0.7" stroke-linejoin="bevel"/>
<path d="M1255.0 627.1 L1253.1 632.2 L1251.1 637.3 L1249.1 642.5 L1249.3 640.3 L1250.2 645.8 L1251.1 651.2 L1252.0 656.6 L1252.9 662.0 L1253.8 667.5 L1244.3 684.3 L1240.0 687.7 L1235.6 691.0 L1231.2 694.4 L1226.9 697.7 L1222.5 701.0 L1218.1 704.4 L1213.8 707.7 L1209.4 711.1 L1205.0 714.4 L1200.7 717.8 L1196.3 721.1 L1191.9 724.5 L1187.6 727.8 L1183.2 731.2 L1178.8 734.5 L1174.5 737.8 L1160.5 742.9 L1155.0 742.6 L1149.5 742.3 L1159.0 729.1 L1158.6 734.6 L1158.3 740.1 L1157.9 745.6 L1157.6 751.1 L1157.2 756.6 L1143.7 774.0 L1138.2 774.8 L1132.8 775.5 L1127.3 776.2 L1121.9 776.9 L1116.4 777.7 L1111.0 778.4 L1105.5 779.1 L1100.1 779.8 L1097.4 781.0 L1106.0 772.5 L1106.0 778.0 L1106.0 783.5 L1106.0 789.0 L1106.0 794.5 L1106.0 800.0 L1098.0 813.8 L1094.2 817.6 L1095.0 810.0 L1095.7 815.5 L1096.4 820.9 L1085.3 812.0 L1090.8 812.0 L1096.3 812.0 L1101.8 812.0 L1107.3 812.0 L1112.8 812.0 L1118.3 812.0 L1123.8 812.0 L1129.3 812.0 L1134.8 812.0 L1150.4 828.6 L1151.0 834.1 L1151.7 839.6 L1152.3 845.0 L1139.1 838.0 L1144.6 838.0 L1150.1 838.0 L1155.6 838.0 L1173.9 853.6 L1173.7 859.1 L1173.5 864.6 L1173.3 870.1 L1173.1 875.6 L1172.9 881.1 L1172.7 886.6 L1172.5 892.1 L1172.3 897.6 L1172.1 903.1 L1171.9 908.6 L1171.6 914.1 L1171.4 919.6 L1171.2 925.1 L1171.0 930.6 L1170.8 936.1 L1170.6 941.6 L1170.4 947.1 L1170.2 952.6 L1170.0 958.0 L1169.8 963.5 L1169.6 969.0 L1169.3 974.5 L1169.1 980.0 L1168.9 985.5 L1168.7 991.0 L1168.5 996.5 L1168.3 1002.0 L1168.1 1007.5 L1167.9 1013.0 L1167.7 1018.5 L1167.5 1024.0 L1167.3 1029.5 L1167.0 1035.0 L1167.4 1038.1 L1168.1 1043.6 L1168.8 1049.0 L1169.5 1054.5 L1170.3 1059.9 L1171.0 1065.4 L1171.7 1070.8 L1172.4 1076.3 L1173.1 1081.7 L1173.8 1087.2 L1174.5 1092.6 L1175.3 1098.1 L1176.0 1103.6 L1176.7 1109.0 L1177.4 1114.5 L1164.5 1105.9 L1169.9 1105.4 L1175.4 1104.9 L1180.9 1104.4 L1186.4 1103.9 L1191.8 1103.4 L1197.3 1102.9 L1202.8 1102.4 L1208.3 1101.9 L1213.7 1101.4 L1219.2 1100.9 L1224.7 1100.4 L1230.2 1099.8 L1235.7 1099.3 L1248.4 1101.6 L1253.3 1104.0 L1261.0 1108.3 L1265.2 1111.8 L1269.4 1115.4 L1273.6 1118.9 L1277.9 1122.4 L1282.1 1126.0 L1286.3 1129.5 L1290.5 1133.1 L1294.7 1136.6 L1298.9 1140.1 L1303.1 1143.7 L1300.8 1142.5 L1306.3 1143.2 L1311.7 1143.9 L1317.2 1144.6 L1322.6 1145.4 L1328.1 1146.1 L1333.5 1146.8 L1339.0 1147.5 L1340.2 1148.1 L1345.6 1147.1 L1351.0 1146.2 L1356.4 1145.2 L1361.8 1144.3 L1367.3 1143.3 L1372.7 1142.4 L1378.1 1141.4 L1383.5 1140.4 L1388.9 1139.5 L1394.3 1138.5 L1399.7 1137.6 L1405.2 1136.6 L1410.6 1135.6 L1416.0 1134.7 L1421.4 1133.7 L1426.8 1132.8 L1432.2 1131.8 L1427.3 1135.7 L1430.3 1131.0 L1438.8 1121.4 L1443.7 1119.0 L1448.7 1116.5 L1456.5 1113.7 L1461.8 1112.2 L1467.1 1110.8 L1475.5 1109.8 L1481.0 1109.6 L1486.5 1109.4 L1492.0 1109.1 L1497.5 1108.9 L1503.0 1108.6 L1508.5 1108.4 L1514.0 1108.2 L1519.5 1107.9 L1525.0 1107.7 L1530.5 1107.4 L1536.0 1107.2 L1539.2 1107.1 L1544.6 1106.0 L1550.0 1104.8 L1555.4 1103.7 L1560.8 1102.6 L1566.2 1101.5 L1571.6 1100.4 L1576.3 1099.2 L1581.7 1097.9 L1587.0 1096.6 L1592.3 1095.2 L1597.7 1093.9 L1603.0 1092.6 L1608.3 1091.2 L1613.7 1089.9 L1619.0 1088.6 L1624.4 1087.2 L1629.7 1085.9 L1635.0 1084.6 L1635.8 1085.0 L1640.3 1081.9 L1644.9 1078.8 L1649.5 1075.7 L1654.0 1072.6 L1658.6 1069.5 L1663.1 1066.5 L1661.7 1069.0 L1663.8 1063.9 L1665.9 1058.8 L1668.0 1053.7 L1669.0 1053.9 L1669.0 1048.4 L1669.0 1042.9 L1669.0 1037.4 L1669.0 1031.9 L1669.0 1026.4 L1669.0 1020.9 L1669.0 1015.4 L1676.0 1001.2 L1679.9 997.3 L1689.6 992.1 L1694.7 990.0 L1691.0 999.9 L1691.5 994.4 L1691.9 988.9 L1692.4 983.4 L1692.8 977.9 L1693.3 972.4 L1693.7 967.0 L1694.8 959.1 L1696.2 953.8 L1697.6 948.4 L1699.0 943.1 L1700.5 937.8 L1701.9 932.5 L1703.3 927.2 L1721.7 916.0 L1727.2 916.0 L1732.7 916.0 L1738.2 916.0 L1743.7 916.0 L1730.0 924.8 L1730.0 919.3 L1730.0 913.8 L1730.0 908.3 L1730.0 902.8 L1730.0 897.3 L1730.0 891.8 L1730.0 886.3 L1730.0 880.8 L1730.0 875.3 L1735.7 884.7 L1730.6 882.6 L1725.5 880.5 L1720.4 878.4 L1715.3 876.3 L1710.3 874.2 L1700.8 865.2 L1697.6 860.7 L1694.4 856.3 L1691.2 851.8 L1688.0 847.3 L1684.8 842.8 L1681.6 838.3 L1684.7 839.0 L1679.6 837.0 L1674.4 835.1 L1669.3 833.1 L1664.2 831.2 L1659.0 829.2 L1646.9 813.5 L1646.6 808.0 L1646.3 802.5 L1645.9 797.0 L1645.6 791.5 L1645.3 786.0 L1648.4 789.2 L1644.8 785.1 L1641.1 781.0 L1637.4 777.0 L1633.7 772.9 L1630.0 768.8 L1626.3 764.7 L1622.6 760.7 L1618.9 756.6 L1615.2 752.5 L1611.5 748.4 L1607.9 744.3 L1604.2 740.3 L1600.5 736.2 L1596.8 732.1 L1593.1 728.0 L1589.4 724.0 L1585.7 719.9 L1582.0 715.8 L1578.3 711.7 L1574.6 707.6 L1571.0 703.6 L1567.3 699.5 L1563.6 695.4 L1559.9 691.3 L1556.2 687.2 L1550.0 673.3 L1550.0 667.8 L1553.1 674.2 L1548.8 670.7 L1544.6 667.2 L1540.3 663.7 L1536.0 660.3 L1531.8 656.8 L1527.5 653.3 L1523.3 649.8 L1519.0 646.3 L1514.7 642.9 L1510.5 639.4 L1506.2 635.9 L1501.9 632.4 L1497.7 628.9 L1493.4 625.4 L1489.2 621.9 L1485.0 618.4 L1480.7 614.9 L1476.5 611.4 L1472.2 607.9 L1468.0 604.4 L1463.7 600.8 L1459.5 597.3 L1455.2 593.8 L1451.0 590.2 L1446.8 586.7 L1442.6 583.2 L1438.3 579.7 L1434.2 576.2 L1429.9 572.8 L1425.7 569.3 L1421.4 565.8 L1417.2 562.3 L1412.9 558.8 L1408.9 555.6 L1404.6 552.2 L1400.2 548.8 L1395.9 545.4 L1414.7 544.2 L1412.5 549.2 L1412.4 550.6 L1411.7 556.0 L1410.9 561.5 L1407.5 570.6 L1405.2 575.6 L1402.9 580.5 L1389.4 589.9 L1384.1 591.5 L1378.9 593.2 L1373.7 594.9 L1368.4 596.5 L1363.2 598.2 L1357.9 599.9 L1352.7 601.5 L1347.4 603.2 L1342.2 604.9 L1337.0 606.5 L1331.7 608.2 L1326.5 609.9 L1321.2 611.5 L1316.0 613.2 L1310.8 614.9 L1305.5 616.5 L1300.3 618.2 L1295.0 619.8 L1289.8 621.5 L1284.5 623.2 L1279.3 624.8 L1274.1 626.5 L1268.8 628.2 L1263.6 629.8 L1258.3 631.5 L1253.1 633.2 L1247.9 634.8Z" fill="none" stroke="#9db9dc" stroke-width=".7"/>
</g>
<path d="M1242.0 622.0 L1235.0 640.0 L1240.0 670.0 L1163.0 729.0 L1145.0 728.0 L1143.0 760.0 L1098.0 766.0 L1092.0 768.0 L1092.0 800.0 L1081.0 811.0 L1083.0 826.0 L1136.0 826.0 L1139.0 852.0 L1160.0 852.0 L1153.0 1036.0 L1164.0 1120.0 L1240.0 1113.0 L1252.0 1119.0 L1296.0 1156.0 L1342.0 1162.0 L1438.0 1145.0 L1445.0 1134.0 L1457.0 1128.0 L1472.0 1124.0 L1541.0 1121.0 L1575.0 1114.0 L1643.0 1097.0 L1674.0 1076.0 L1683.0 1054.0 L1683.0 1014.0 L1690.0 1007.0 L1705.0 1001.0 L1708.0 964.0 L1717.0 930.0 L1744.0 930.0 L1744.0 873.0 L1715.0 861.0 L1690.0 826.0 L1661.0 815.0 L1659.0 780.0 L1564.0 675.0 L1564.0 665.0 L1515.0 625.0 L1475.0 592.0 L1445.0 567.0 L1420.0 546.5 L1404.0 534.0 L1399.0 545.0 L1397.0 560.0 L1390.0 575.0Z" fill="none" stroke="#b9cfee" stroke-width=".8"/>
<g clip-path="url(#cBody)">
<path d="M1313.7 629.2 L1381.9 606.4 L1388.9 644.9 L1402.8 672.9 L1423.8 679.9 L1427.3 707.9 L1299.7 706.1 L1282.2 697.4 L1308.4 662.4Z" fill="url(#gUp)" />
<path d="M1282.2 697.4 L1299.7 706.1 L1427.3 707.9 L1462.3 732.3 L1427.3 760.0 L1280.4 760.0 L1279.6 714.9Z" fill="#cdcdcd" />
<path d="M1299.7 706.1 L1427.3 707.9" fill="none" stroke="#e8e8e8" stroke-width="1" />
<path d="M1452.5 650.9 L1504.9 664.9 L1623.9 804.8 L1690.3 874.8 L1637.8 880.0 L1518.9 819.9 L1400.0 760.1 L1400.0 664.9Z" fill="url(#gUR)" />
<path d="M1400.0 760.1 L1518.9 819.9 L1637.8 880.0 L1574.9 887.0 L1525.9 860.8 L1470.0 836.3 L1400.0 797.8Z" fill="#f2f2f2" />
<path d="M1400.0 760.1 L1518.9 819.9 L1637.8 880.0" fill="none" stroke="#6f6f6f" stroke-width="0.8" stroke-dasharray="2 1.500"/>
<path d="M1452.5 602.0 L1532.9 664.9 L1550.4 696.4 L1522.4 724.4 L1480.4 675.4 L1452.5 650.9Z" fill="#dadada" />
<path d="M1546.9 755.9 L1578.4 738.4 L1623.9 787.4 L1623.9 804.8 L1609.9 801.3 L1564.4 755.9Z" fill="#d4d4d4" />
<circle cx="1331" cy="886" r="168" fill="#ededed"/>
<path d="M1274.8 746.9A150 150 0 0 1 1406.0 1015.9" fill="none" stroke="#f6f6f6" stroke-width="32" />
<path d="M1282.0 775.9A120.5 120.5 0 0 1 1448.9 860.9" fill="none" stroke="url(#gR1)" stroke-width="27" />
<path d="M1276.3 763.1A134.5 134.5 0 0 1 1463.5 862.6" fill="none" stroke="#8e8e8e" stroke-width="0.8" />
<path d="M1287.5 788.3A107 107 0 0 1 1434.8 860.1" fill="none" stroke="#9a9a9a" stroke-width="0.8" />
<path d="M1287.2 796.1A100 100 0 0 1 1425.0 920.2" fill="none" stroke="#f7f7f7" stroke-width="13" />
<path d="M1298.4 805.3A87 87 0 0 1 1417.7 893.6" fill="none" stroke="#d4d4d4" stroke-width="14" />
<path d="M1295.8 798.8A94 94 0 0 1 1424.1 899.1" fill="none" stroke="#a2a2a2" stroke-width="0.7" />
<path d="M1301.0 811.8A80 80 0 0 1 1410.8 891.6" fill="none" stroke="#aaaaaa" stroke-width="0.7" />
<circle cx="1331" cy="886" r="76" fill="#efefef" stroke="#b5b5b5" stroke-width=".8"/>
<path d="M1268.5 1014.9 L1409.7 1014.9 L1435.3 1066.2 L1425.1 1081.6 L1332.7 1097.0 L1314.7 1084.2 L1283.9 1068.8 L1268.5 1045.7Z" fill="url(#gFloor)" />
<path d="M1399.2 943.2A89 89 0 0 1 1303.5 970.6" fill="none" stroke="url(#gR2)" stroke-width="22" />
<path d="M1407.6 950.3A100 100 0 0 1 1300.1 981.1" fill="none" stroke="#8c8c8c" stroke-width="0.8" />
<path d="M1392.5 934.0A78 78 0 0 1 1304.3 959.3" fill="none" stroke="#9a9a9a" stroke-width="0.8" />
<path d="M1418.7 965.0A118 118 0 0 1 1294.5 998.2" fill="none" stroke="#f4f4f4" stroke-width="30" />
<path d="M1438.5 989.9A149.5 149.5 0 0 1 1282.3 1027.4" fill="none" stroke="url(#gR3)" stroke-width="29" />
<path d="M1449.0 999.9A164 164 0 0 1 1277.6 1041.1" fill="none" stroke="#909090" stroke-width="0.8" />
<path d="M1431.3 976.3A135 135 0 0 1 1284.8 1012.9" fill="none" stroke="#9c9c9c" stroke-width="0.8" />
<circle cx="1331" cy="886" r="60" fill="#fbfbfb" stroke="#9a9a9a" stroke-width=".9"/>
<path d="M1319.0 808.0 L1348.0 808.0 L1348.0 830.0 L1319.0 830.0Z" fill="#fbfbfb" stroke="#8e8e8e" stroke-width=".8"/>
<path d="M1321.0 940.0 L1347.0 940.0 L1347.0 952.0 L1321.0 952.0Z" fill="#f7f7f7" stroke="#9a9a9a" stroke-width=".8"/>
<circle cx="1331" cy="886" r="53" fill="#f2f2f2" stroke="#a8a8a8" stroke-width=".8"/>
<circle cx="1331" cy="886" r="47" fill="#dedede" stroke="#8a8a8a" stroke-width=".8"/>
<path d="M1346.0 844.7A44 44 0 0 1 1353.0 924.1" fill="none" stroke="#2a2a2a" stroke-width="2.2" />
<circle cx="1331" cy="886" r="40.500" fill="#3b78bf" stroke="#d9e2ee" stroke-width="1.2"/>
<path d="M1245.5 675.5 L1280.5 693.0 L1280.5 839.9 L1245.5 839.9Z" fill="#f3f3f3" />
<path d="M1264.7 686.0 L1280.5 694.7 L1280.5 839.9 L1264.7 839.9Z" fill="#fdfdfd" />
<path d="M1264.7 686.0 L1264.7 839.9" fill="none" stroke="#b4b4b4" stroke-width="0.8" />
<path d="M1280.5 694.7 L1280.5 839.9" fill="none" stroke="#9c9c9c" stroke-width="0.8" />
<path d="M1168.5 750.7 L1242.0 675.5 L1245.5 745.4 L1173.7 818.9Z" fill="#2d2d2d" />
<path d="M1173.7 818.9 L1245.5 745.4 L1245.5 839.9 L1175.5 843.4Z" fill="#f6f6f6" />
<path d="M1173.7 818.9 L1245.5 745.4" fill="none" stroke="#c8c8c8" stroke-width="1" />
<path d="M1163.2 755.9 L1168.5 750.7 L1173.7 818.9 L1175.5 843.4 L1165.0 839.9Z" fill="#111" />
<path d="M1161.5 846.9 L1277.0 843.4 L1273.5 864.4 L1165.0 867.9Z" fill="#f7f7f7" />
<path d="M1165.0 867.9 L1252.5 865.1 L1252.5 874.9 L1170.2 883.7Z" fill="#1c1c1c" />
<path d="M1170.2 883.7 L1252.5 874.9 L1254.2 1000.2 L1172.0 1000.2Z" fill="url(#gPk)" />
<path d="M1186.0 885.4 L1196.5 927.4 L1217.5 958.9 L1245.5 979.9" fill="none" stroke="#fafafa" stroke-width="9"/>
<path d="M1186.0 885.4 L1196.5 927.4 L1217.5 958.9 L1245.5 979.9" fill="none" stroke="#a8a8a8" stroke-width=".8"/>
<path d="M1224.5 881.9 L1231.5 913.4 L1245.5 937.9" fill="none" stroke="#d6d6d6" stroke-width="7"/>
<path d="M1235.0 876.7 L1252.5 874.9 L1254.2 1000.2 L1236.7 1000.2Z" fill="#e9e9e9" />
<path d="M1235.0 876.7 L1236.7 1000.2" fill="none" stroke="#a6a6a6" stroke-width="0.8" />
<path d="M1426.0 1053.9 L1581.0 1038.4 L1627.5 1001.2 L1639.9 970.2 L1667.8 942.3 L1674.0 1013.6 L1652.3 1075.6 L1550.0 1088.0 L1432.2 1084.9Z" fill="url(#gLR)" />
<path d="M1574.9 887.0 L1644.8 885.3 L1697.3 874.8 L1700.8 895.8 L1672.8 916.8 L1644.8 909.8 L1595.9 913.3Z" fill="#c2c2c2" />
<path d="M1595.9 913.3 L1644.8 909.8 L1672.8 916.8 L1665.8 944.7 L1644.8 979.7 L1588.9 1000.0 L1567.9 944.7Z" fill="url(#gRM)" />
<path d="M1449.0 595.0 L1532.9 661.4 L1553.9 692.9 L1539.9 710.4 L1525.9 727.9 L1546.9 755.9 L1578.4 738.4 L1623.9 787.4 L1623.9 822.3 L1644.8 836.3 L1686.8 867.8 L1700.8 874.8 L1690.3 909.8 L1665.8 916.8 L1672.8 944.7 L1644.8 979.7" fill="none" stroke="#f4f4f4" stroke-width="17" stroke-linejoin="round"/>
<path d="M1452.5 601.3 L1529.4 664.9 L1548.7 694.7 L1520.7 727.9 L1545.2 761.1 L1576.6 743.6 L1618.6 790.8 L1618.6 825.8 L1641.3 841.6 L1661.0 848.5 L1692.6 868.5" fill="none" stroke="#b6b6b6" stroke-width="9" stroke-linejoin="miter" transform="translate(-7,5.500)"/>
<path d="M1452.5 601.3 L1529.4 664.9 L1548.7 694.7 L1520.7 727.9 L1545.2 761.1 L1576.6 743.6 L1618.6 790.8 L1618.6 825.8 L1641.3 841.6" fill="none" stroke="#8e8e8e" stroke-width=".7" transform="translate(-11.500,9)"/>
<path d="M1452.5 601.3 L1529.4 664.9 L1548.7 694.7 L1520.7 727.9 L1545.2 761.1 L1576.6 743.6 L1618.6 790.8 L1618.6 825.8 L1641.3 841.6" fill="none" stroke="#3a3a3a" stroke-width="9.500" stroke-linejoin="miter"/>
<path d="M1641.0 841.6 L1661.0 848.5 L1692.6 868.5 L1696.0 886.0 L1677.0 908.0 L1675.0 927.0 L1673.5 943.0 L1660.0 960.0" fill="none" stroke="#383838" stroke-width="14" stroke-linejoin="round"/>
<path d="M1452.5 601.3 L1529.4 664.9 L1548.7 694.7 L1520.7 727.9 L1545.2 761.1 L1576.6 743.6 L1618.6 790.8 L1618.6 825.8 L1641.3 841.6" fill="none" stroke="#dfe6ef" stroke-width=".7" transform="translate(3.800,-3.200)"/>
<path d="M1540.0 829.0 L1635.0 845.0 L1683.0 877.0 L1635.0 886.0 L1572.0 886.0Z" fill="#bdbdbd" />
<path d="M1674.0 942.3 L1667.8 970.2 L1639.9 985.7 L1632.2 1013.6 L1639.9 1057.0 L1652.3 1078.7 L1605.8 1088.0 L1512.8 1097.3 L1509.7 1088.0 L1426.0 1084.9" fill="none" stroke="#f0f0f0" stroke-width="14" stroke-linejoin="round"/>
<path d="M1672.5 943.9 L1665.4 967.1 L1637.5 983.2 L1629.1 1013.6 L1636.8 1057.0 L1647.7 1075.6" fill="none" stroke="#c4c4c4" stroke-width="8" stroke-linejoin="round" transform="translate(-8,-3)"/>
<path d="M1672.5 943.9 L1665.4 967.1 L1637.5 983.2 L1629.1 1013.6 L1636.8 1057.0 L1647.7 1075.6" fill="none" stroke="#2e2e2e" stroke-width="12.500" stroke-linejoin="round"/>
<path d="M1647.7 1075.6 L1605.8 1084.9 L1514.4 1093.6" fill="none" stroke="#2b2b2b" stroke-width="5.500" stroke-linejoin="round"/>
<path d="M1696.0 886.0 L1677.0 908.0 L1675.0 927.0 L1673.5 943.0 L1660.0 960.0" fill="none" stroke="#383838" stroke-width="14" stroke-linejoin="round"/>
<path d="M1512.3 1077.8 L1630.4 1062.4 L1640.7 1075.2 L1635.5 1086.7 L1512.3 1095.7Z" fill="#b3b3b3" />
<path d="M1512.3 1095.2 L1635.5 1086.2 L1645.8 1076.5" fill="none" stroke="#141414" stroke-width="2.5" />
<path d="M1430.2 1066.2 L1486.7 1075.2 L1563.7 1068.8 L1615.0 1048.2 L1630.4 1030.3 L1602.2 1035.4 L1550.8 1055.9 L1486.7 1063.6 L1443.0 1058.5Z" fill="#fdfdfd" />
<path d="M1430.2 1066.2 L1486.7 1075.2 L1563.7 1068.8 L1615.0 1048.2 L1630.4 1030.3" fill="none" stroke="#9a9a9a" stroke-width="0.8" />
<path d="M1333.0 1097.3 L1422.9 1084.9 L1422.9 1112.8 L1413.6 1125.2 L1336.1 1134.5Z" fill="url(#gTray)" />
<path d="M1333.0 1133.9 L1413.6 1122.7 L1426.0 1114.4 L1438.4 1119.0 L1413.6 1129.9 L1336.1 1139.2Z" fill="#111" />
<path d="M1421.4 1084.9 L1433.8 1084.9 L1433.8 1103.5 L1426.0 1112.8 L1421.4 1112.8Z" fill="#1c1c1c" />
<path d="M1255.4 897.2 L1306.9 897.2 L1306.9 1005.3 L1259.2 1005.3Z" fill="#fcfcfc" stroke="#b0b0b0" stroke-width=".7"/>
<path d="M1259.2 1005.3 L1306.9 1005.3 L1306.9 1013.3 L1259.2 1013.3Z" fill="#c9c9c9" />
<path d="M1646.8 1013.6 L1684.0 1013.6 L1684.0 1053.9 L1646.8 1053.9Z" fill="url(#gB10)" stroke="#9a9a9a" stroke-width=".7"/>
<ellipse cx="1649" cy="1035" rx="5" ry="18" fill="#2a2a2a"/>
<circle cx="1489" cy="952" r="101" fill="#e8e8e8"/>
<circle cx="1489" cy="952" r="92.500" fill="none" stroke="#f6f9fd" stroke-width="15"/>
<path d="M1589.0 952.0 L1573.8 957.6 L1588.1 965.1 L1572.4 968.6 L1585.6 977.9 L1569.5 979.3 L1581.4 990.3 L1565.2 989.6 L1575.6 1002.0 L1559.7 999.2 L1568.3 1012.9 L1552.9 1008.0 L1559.7 1022.7 L1545.0 1015.9 L1549.9 1031.3 L1536.2 1022.7 L1539.0 1038.6 L1526.6 1028.2 L1527.3 1044.4 L1516.3 1032.5 L1514.9 1048.6 L1505.6 1035.4 L1502.1 1051.1 L1494.6 1036.8 L1489.0 1052.0 L1483.4 1036.8 L1475.9 1051.1 L1472.4 1035.4 L1463.1 1048.6 L1461.7 1032.5 L1450.7 1044.4 L1451.4 1028.2 L1439.0 1038.6 L1441.8 1022.7 L1428.1 1031.3 L1433.0 1015.9 L1418.3 1022.7 L1425.1 1008.0 L1409.7 1012.9 L1418.3 999.2 L1402.4 1002.0 L1412.8 989.6 L1396.6 990.3 L1408.5 979.3 L1392.4 977.9 L1405.6 968.6 L1389.9 965.1 L1404.2 957.6 L1389.0 952.0 L1404.2 946.4 L1389.9 938.9 L1405.6 935.4 L1392.4 926.1 L1408.5 924.7 L1396.6 913.7 L1412.8 914.4 L1402.4 902.0 L1418.3 904.8 L1409.7 891.1 L1425.1 896.0 L1418.3 881.3 L1433.0 888.1 L1428.1 872.7 L1441.8 881.3 L1439.0 865.4 L1451.4 875.8 L1450.7 859.6 L1461.7 871.5 L1463.1 855.4 L1472.4 868.6 L1475.9 852.9 L1483.4 867.2 L1489.0 852.0 L1494.6 867.2 L1502.1 852.9 L1505.6 868.6 L1514.9 855.4 L1516.3 871.5 L1527.3 859.6 L1526.6 875.8 L1539.0 865.4 L1536.2 881.3 L1549.9 872.7 L1545.0 888.1 L1559.7 881.3 L1552.9 896.0 L1568.3 891.1 L1559.7 904.8 L1575.6 902.0 L1565.2 914.4 L1581.4 913.7 L1569.5 924.7 L1585.6 926.1 L1572.4 935.4 L1588.1 938.9 L1573.8 946.4Z" fill="none" stroke="#79abec" stroke-width=".7"/>
<circle cx="1489" cy="952" r="100" fill="none" stroke="#9fb4cf" stroke-width=".8"/>
<circle cx="1489" cy="952" r="85" fill="#e3e3e3" stroke="#8f9aa8" stroke-width=".9"/>
<circle cx="1489" cy="952" r="80" fill="url(#gDish)"/>
<path d="M1505.4 874.7A79 79 0 0 1 1566.3 968.4" fill="none" stroke="#333" stroke-width="3" />
<path d="M1491 946L1413.8 918.6" stroke="#f6f6f6" stroke-width="11"/>
<path d="M1491 946L1413.8 918.6" stroke="#a0a0a0" stroke-width=".8" transform="translate(0,5.500)"/>
<path d="M1491 946L1451.4 1016.6" stroke="#f6f6f6" stroke-width="11"/>
<path d="M1491 946L1451.4 1016.6" stroke="#a0a0a0" stroke-width=".8" transform="translate(0,5.500)"/>
<path d="M1491 946L1564.2 973.4" stroke="#f6f6f6" stroke-width="11"/>
<path d="M1491 946L1564.2 973.4" stroke="#a0a0a0" stroke-width=".8" transform="translate(0,5.500)"/>
<circle cx="1491" cy="946" r="46" fill="none" stroke="#cfcfcf" stroke-width="10"/>
<circle cx="1491" cy="946" r="51" fill="none" stroke="#9aa7b6" stroke-width=".7"/>
<circle cx="1491" cy="946" r="37" fill="#fdfdfd" stroke="#777" stroke-width="1"/>
<path d="M1487.9 981.4A35.5 35.5 0 0 1 1461.9 925.6" fill="none" stroke="#1d1d2a" stroke-width="4" />
<path d="M1426.0 1022.9 L1438.4 1013.6 L1450.8 1026.0 L1438.4 1038.4Z" fill="#fafafa" stroke="#8a8a8a" stroke-width=".8"/>
<circle cx="1272.5" cy="652" r="31" fill="#f6f9fd" stroke="#a9c6ea" stroke-width=".8"/>
<path d="M1285.0 652.0L1303.5 652.0M1284.9 653.8L1303.2 656.4M1284.5 655.5L1302.2 660.7M1283.9 657.2L1300.7 664.9M1283.0 658.8L1298.6 668.8M1281.9 660.2L1295.9 672.3M1280.7 661.4L1292.8 675.4M1279.3 662.5L1289.3 678.1M1277.7 663.4L1285.4 680.2M1276.0 664.0L1281.2 681.7M1274.3 664.4L1276.9 682.7M1272.5 664.5L1272.5 683.0M1270.7 664.4L1268.1 682.7M1269.0 664.0L1263.8 681.7M1267.3 663.4L1259.6 680.2M1265.7 662.5L1255.7 678.1M1264.3 661.4L1252.2 675.4M1263.1 660.2L1249.1 672.3M1262.0 658.8L1246.4 668.8M1261.1 657.2L1244.3 664.9M1260.5 655.5L1242.8 660.7M1260.1 653.8L1241.8 656.4M1260.0 652.0L1241.5 652.0M1260.1 650.2L1241.8 647.6M1260.5 648.5L1242.8 643.3M1261.1 646.8L1244.3 639.1M1262.0 645.2L1246.4 635.2M1263.1 643.8L1249.1 631.7M1264.3 642.6L1252.2 628.6M1265.7 641.5L1255.7 625.9M1267.3 640.6L1259.6 623.8M1269.0 640.0L1263.8 622.3M1270.7 639.6L1268.1 621.3M1272.5 639.5L1272.5 621.0M1274.3 639.6L1276.9 621.3M1276.0 640.0L1281.2 622.3M1277.7 640.6L1285.4 623.8M1279.3 641.5L1289.3 625.9M1280.7 642.6L1292.8 628.6M1281.9 643.8L1295.9 631.7M1283.0 645.2L1298.6 635.2M1283.9 646.8L1300.7 639.1M1284.5 648.5L1302.2 643.3M1284.9 650.2L1303.2 647.6" stroke="#79abec" stroke-width=".7" fill="none"/>
<circle cx="1272.5" cy="652" r="12.0" fill="#f2f2f2" stroke="#8a8a8a" stroke-width="1"/>
<circle cx="1272.5" cy="652" r="10.5" fill="#fff"/>
<path d="M1262.0 653A10.5 10.5 0 0 1 1283.0 650Q1272.5 655.7 1262.0 653Z" fill="#1a1a1a"/>
<circle cx="1682" cy="976" r="21" fill="#f6f9fd" stroke="#a9c6ea" stroke-width=".8"/>
<path d="M1691.5 976.0L1703.0 976.0M1691.4 977.4L1702.8 979.0M1691.1 978.7L1702.1 981.9M1690.6 979.9L1701.1 984.7M1690.0 981.1L1699.7 987.4M1689.2 982.2L1697.9 989.8M1688.2 983.2L1695.8 991.9M1687.1 984.0L1693.4 993.7M1685.9 984.6L1690.7 995.1M1684.7 985.1L1687.9 996.1M1683.4 985.4L1685.0 996.8M1682.0 985.5L1682.0 997.0M1680.6 985.4L1679.0 996.8M1679.3 985.1L1676.1 996.1M1678.1 984.6L1673.3 995.1M1676.9 984.0L1670.6 993.7M1675.8 983.2L1668.2 991.9M1674.8 982.2L1666.1 989.8M1674.0 981.1L1664.3 987.4M1673.4 979.9L1662.9 984.7M1672.9 978.7L1661.9 981.9M1672.6 977.4L1661.2 979.0M1672.5 976.0L1661.0 976.0M1672.6 974.6L1661.2 973.0M1672.9 973.3L1661.9 970.1M1673.4 972.1L1662.9 967.3M1674.0 970.9L1664.3 964.6M1674.8 969.8L1666.1 962.2M1675.8 968.8L1668.2 960.1M1676.9 968.0L1670.6 958.3M1678.1 967.4L1673.3 956.9M1679.3 966.9L1676.1 955.9M1680.6 966.6L1679.0 955.2M1682.0 966.5L1682.0 955.0M1683.4 966.6L1685.0 955.2M1684.7 966.9L1687.9 955.9M1685.9 967.4L1690.7 956.9M1687.1 968.0L1693.4 958.3M1688.2 968.8L1695.8 960.1M1689.2 969.8L1697.9 962.2M1690.0 970.9L1699.7 964.6M1690.6 972.1L1701.1 967.3M1691.1 973.3L1702.1 970.1M1691.4 974.6L1702.8 973.0" stroke="#79abec" stroke-width=".7" fill="none"/>
<circle cx="1682" cy="976" r="9.0" fill="#f2f2f2" stroke="#8a8a8a" stroke-width="1"/>
<circle cx="1682" cy="976" r="7.5" fill="#1a1a1a"/>
<circle cx="1116.7" cy="788" r="16" fill="#f6f9fd" stroke="#a9c6ea" stroke-width=".8"/>
<path d="M1125.2 788.0L1132.7 788.0M1125.1 789.2L1132.5 790.3M1124.9 790.4L1132.1 792.5M1124.4 791.5L1131.3 794.6M1123.9 792.6L1130.2 796.7M1123.1 793.6L1128.8 798.5M1122.3 794.4L1127.2 800.1M1121.3 795.2L1125.4 801.5M1120.2 795.7L1123.3 802.6M1119.1 796.2L1121.2 803.4M1117.9 796.4L1119.0 803.8M1116.7 796.5L1116.7 804.0M1115.5 796.4L1114.4 803.8M1114.3 796.2L1112.2 803.4M1113.2 795.7L1110.1 802.6M1112.1 795.2L1108.0 801.5M1111.1 794.4L1106.2 800.1M1110.3 793.6L1104.6 798.5M1109.5 792.6L1103.2 796.7M1109.0 791.5L1102.1 794.6M1108.5 790.4L1101.3 792.5M1108.3 789.2L1100.9 790.3M1108.2 788.0L1100.7 788.0M1108.3 786.8L1100.9 785.7M1108.5 785.6L1101.3 783.5M1109.0 784.5L1102.1 781.4M1109.5 783.4L1103.2 779.3M1110.3 782.4L1104.6 777.5M1111.1 781.6L1106.2 775.9M1112.1 780.8L1108.0 774.5M1113.2 780.3L1110.1 773.4M1114.3 779.8L1112.2 772.6M1115.5 779.6L1114.4 772.2M1116.7 779.5L1116.7 772.0M1117.9 779.6L1119.0 772.2M1119.1 779.8L1121.2 772.6M1120.2 780.3L1123.3 773.4M1121.3 780.8L1125.4 774.5M1122.3 781.6L1127.2 775.9M1123.1 782.4L1128.8 777.5M1123.9 783.4L1130.2 779.3M1124.4 784.5L1131.3 781.4M1124.9 785.6L1132.1 783.5M1125.1 786.8L1132.5 785.7" stroke="#79abec" stroke-width=".7" fill="none"/>
<circle cx="1116.7" cy="788" r="8.0" fill="#f2f2f2" stroke="#8a8a8a" stroke-width="1"/>
<circle cx="1116.7" cy="788" r="6.5" fill="#fff"/>
<path d="M1110.2 789A6.5 6.5 0 0 1 1123.2 786Q1116.7 790.3 1110.2 789Z" fill="#1a1a1a"/>
</g>
<path d="M1389.7 644.9 L1399.3 665.9 L1418.6 673.8 L1439.6 667.7 L1448.3 646.7 L1444.8 662.4 L1434.3 678.1 L1413.3 679.9 L1394.1 669.4Z" fill="#1c1c1c" />
<path d="M1394.1 669.4 L1413.3 679.9 L1434.3 678.1 L1444.8 662.4 L1446.6 672.9 L1434.3 685.1 L1413.3 686.0 L1392.3 676.4Z" fill="#d8d8d8" />
<path d="M1403.8 537.4 L1450.7 593.8 L1449.2 639.9 L1389.5 639.9 L1388.7 601.7 L1395.9 571.5Z" fill="#f7f9fd" />
<path d="M1405.4 560.4 L1432.5 558.8 L1395.9 574.7 L1446.8 593.8 L1392.7 589.0 L1411.8 611.3 L1389.5 601.7" fill="none" stroke="#79abec" stroke-width="0.7" />
<path d="M1432.5 558.8 L1446.8 593.8 L1443.6 566.8 L1456.3 592.2" fill="none" stroke="#79abec" stroke-width="0.7" />
<circle cx="1418.600" cy="636" r="29" fill="#f7f9fd" stroke="#a9c6ea" stroke-width=".8"/>
<path d="M1422.6 640.0L1446.6 640.0M1422.6 640.5L1446.4 643.4M1422.5 641.0L1445.8 646.7M1422.3 641.4L1444.8 649.9M1422.1 641.9L1443.4 653.0M1421.9 642.3L1441.6 655.9M1421.6 642.7L1439.6 658.6M1421.3 643.0L1437.2 661.0M1420.9 643.3L1434.5 663.0M1420.5 643.5L1431.6 664.8M1420.0 643.7L1428.5 666.2M1419.6 643.9L1425.3 667.2M1419.1 644.0L1422.0 667.8M1418.6 644.0L1418.6 668.0M1418.1 644.0L1415.2 667.8M1417.6 643.9L1411.9 667.2M1417.2 643.7L1408.7 666.2M1416.7 643.5L1405.6 664.8M1416.3 643.3L1402.7 663.0M1415.9 643.0L1400.0 661.0M1415.6 642.7L1397.6 658.6M1415.3 642.3L1395.6 655.9M1415.1 641.9L1393.8 653.0M1414.9 641.4L1392.4 649.9M1414.7 641.0L1391.4 646.7M1414.6 640.5L1390.8 643.4M1414.6 640.0L1390.6 640.0M1414.6 639.5L1390.8 636.6M1414.7 639.0L1391.4 633.3M1414.9 638.6L1392.4 630.1M1415.1 638.1L1393.8 627.0M1415.3 637.7L1395.6 624.1M1415.6 637.3L1397.6 621.4M1415.9 637.0L1400.0 619.0M1416.3 636.7L1402.7 617.0M1416.7 636.5L1405.6 615.2M1417.2 636.3L1408.7 613.8M1417.6 636.1L1411.9 612.8M1418.1 636.0L1415.2 612.2M1418.6 636.0L1418.6 612.0M1419.1 636.0L1422.0 612.2M1419.6 636.1L1425.3 612.8M1420.0 636.3L1428.5 613.8M1420.5 636.5L1431.6 615.2M1420.9 636.7L1434.5 617.0M1421.3 637.0L1437.2 619.0M1421.6 637.3L1439.6 621.4M1421.9 637.7L1441.6 624.1M1422.1 638.1L1443.4 627.0M1422.3 638.6L1444.8 630.1M1422.5 639.0L1445.8 633.3M1422.6 639.5L1446.4 636.6" stroke="#79abec" stroke-width=".7" fill="none"/>
<circle cx="1306" cy="1112" r="26" fill="url(#tri2)" stroke="#a9c6ea" stroke-width=".8"/>
<ellipse cx="1303" cy="1122" rx="10" ry="7" fill="#fff" stroke="#888" stroke-width=".8"/>
<path d="M1294.0 1122.0A9 9 0 0 1 1310.8 1117.5" fill="none" stroke="#222" stroke-width="2.5" />
<circle cx="1457" cy="1100" r="21" fill="url(#tri2)" stroke="#a9c6ea" stroke-width=".8"/>
<ellipse cx="1457" cy="1100" rx="9" ry="11" fill="#fff" stroke="#888" stroke-width=".8"/>
<path d="M1448.5 1096.9A9 9 0 0 1 1465.5 1096.9" fill="none" stroke="#222" stroke-width="2.5" />
</g>
<g id="motor">
<path d="M958.2 817.7 L975.0 817.7 L975.0 834.2 L958.2 834.2 L956.1 830.0 L956.1 822.3Z" fill="url(#gPin)" />
<path d="M992.5 801.3 L1090.5 795.0 L1090.5 821.2 L1080.0 823.0 L1080.0 833.5 L978.5 821.2 L983.7 807.2Z" fill="url(#gM0)" />
<path d="M978.5 819.5 L1080.0 831.7 L1083.5 833.5 L1135.9 821.2 L1136.6 934.9 L966.2 942.6 L964.5 900.0 L968.7 861.5Z" fill="url(#gM1)" />
<path d="M1080.0 823.0 L1090.5 821.2 L1135.9 820.2 L1135.9 830.0 L1083.5 834.2 L1080.0 833.5Z" fill="#d6d6d6" />
<path d="M1080.0 833.5 L1083.5 834.2 L1135.9 830.0" fill="none" stroke="#6e6e6e" stroke-width="0.8" />
<path d="M961.7 945.4 L966.2 941.9 L1130.7 934.2 L1130.7 992.7 L963.1 1000.7 L956.8 983.9 L956.1 966.4Z" fill="url(#gM2)" />
<path d="M963.1 1000.7 L1130.7 992.7 L1130.7 1025.9 L1073.0 1018.9 L968.0 1033.6Z" fill="url(#gM3)" />
<path d="M968.0 1033.6 L1073.0 1018.9 L1130.7 1025.9 L1131.7 1076.7 L1097.5 1095.9 L1080.0 1088.9 L1003.0 1092.4 L975.0 1076.7 L970.8 1057.4Z" fill="url(#gM4)" />
<path d="M1015.2 1057.4 L1025.7 1047.6 L1060.7 1047.6 L1060.7 1036.4 L1073.0 1036.4 L1074.7 1071.4 L1025.7 1071.4Z" fill="url(#gM5)" />
<path d="M1074.7 1038.2 L1130.7 1029.4 L1131.7 1074.9 L1074.7 1080.2Z" fill="url(#gM6)" />
<path d="M996.0 1076.7 L1080.0 1074.9 L1080.0 1088.9 L1003.0 1092.4Z" fill="#e9e9e9" />
<path d="M1080.0 1080.2 L1131.7 1076.7 L1134.2 1081.9 L1097.5 1095.9Z" fill="#1f1f1f" />
<path d="M1098.2 1092.4 L1135.9 1080.2 L1149.9 1074.9 L1153.4 1123.9 L1135.9 1127.4 L1100.3 1134.4Z" fill="url(#gM7)" />
<path d="M1137.7 849.2 L1149.9 844.0 L1160.4 847.5 L1163.9 865.0 L1163.9 1144.9 L1154.1 1179.9 L1128.9 1184.1 L1113.2 1162.4 L1114.9 1136.1 L1135.9 1127.4 L1153.4 1123.9 L1149.9 1074.9 L1131.7 1076.7 L1130.7 934.2 L1135.9 900.0Z" fill="url(#gFl)" />
<path d="M1128.4 832.5 L1135.8 822.0 L1138.2 850.0 L1135.1 902.4 L1134.0 1000.0 L1131.7 1074.9 L1128.9 1076.7 L1130.7 1004.9 L1128.1 919.9Z" fill="#0b0b0b" />
<path d="M1114.9 1136.1 L1135.9 1128.1 L1141.2 1151.9 L1127.2 1157.1 L1116.7 1150.1Z" fill="#222" />
<path d="M1128.9 1157.1 L1141.2 1151.9 L1149.9 1179.9 L1130.7 1183.4Z" fill="url(#tri2)" />
<path d="M966.2 942.6 L1136.6 934.9" fill="none" stroke="#5a5a5a" stroke-width="0.9" />
<path d="M963.1 1000.7 L1130.7 992.7" fill="none" stroke="#8a8a8a" stroke-width="0.8" />
<path d="M968.0 1033.6 L1073.0 1018.9 L1130.7 1025.9" fill="none" stroke="#7c7c7c" stroke-width="0.8" />
</g>
<g id="slab">
<path d="M1154.1 1036.4 L1242.7 1032.9 L1244.4 1113.4 L1163.9 1122.1 L1158.7 1074.9Z" fill="url(#gSl)" />
<path d="M1154.1 1036.4 L1242.7 1032.9 L1244.4 1113.4 L1163.9 1122.1" fill="none" stroke="#8c8c8c" stroke-width="0.8" />
<path d="M1242.7 1036.4 L1282.9 1036.4 L1284.6 1073.2 L1242.7 1073.2Z" fill="url(#gSh)" />
<path d="M1163.9 1015.4 L1254.9 1017.2 L1244.4 1036.4 L1154.1 1036.4Z" fill="url(#tri2)" />
<path d="M1244.4 1067.9 L1300.0 1067.9 L1300.0 1113.4 L1268.9 1123.9 L1244.4 1113.4Z" fill="url(#tri2)" />
</g>
<g id="junc">
<path d="M1241.1 619.6 L1287.4 614.3 L1331.1 607.3 L1366.1 594.2 L1388.9 577.6 L1396.7 555.7 L1406.3 556.6 L1402.8 583.7 L1383.6 603.8 L1339.9 623.1 L1313.7 628.8 L1243.7 632.3Z" fill="url(#gCol)" />
<path d="M1243.7 632.3 L1313.7 628.8 L1339.9 623.1 L1383.6 603.8 L1402.8 583.7 L1406.3 556.6" fill="none" stroke="#9aa4b0" stroke-width="0.8" />
<path d="M1241.0 618.0 L1287.0 606.0 L1327.0 595.5 L1350.5 582.5 L1386.0 572.0 L1377.0 588.0 L1357.0 600.0 L1331.0 610.0 L1287.0 617.5 L1252.0 620.5Z" fill="#1c1c1c" />
<path d="M1241.0 618.0 L1287.0 606.0 L1327.0 595.5 L1350.5 582.5 L1386.0 572.0" fill="none" stroke="#f0f0f0" stroke-width="1.2" />
</g>
<g id="pink" fill="none" stroke="#e0667f" stroke-width="1">
<path d="M1152.7 680.8 L1566.6 574.3 L1691.9 976.9 L1273.2 1084.9Z"/>
<path d="M1438.0 590.5 L1770.3 705.6 L1636.8 1206.5 L1304.5 1091.4Z"/>
<path d="M1152.7 680.8 L1446.1 874.2"/>
<path d="M1240.8 636.5 L1271.6 651.6 L1221.9 663.5 L1152.7 680.8"/>
<path d="M1271.6 651.6 L1389.4 620.2 L1416.4 631.1"/>
<path d="M1384.0 933.6 L1502.8 966.1 L1384.0 933.6 L1459.6 922.8"/>
<path d="M1267.8 1082.2 L1481.2 968.8"/>
<path d="M1319.1 1079.5 L1662.2 976.9"/>
<path d="M1600.1 901.2 L1508.2 949.8"/>
<path d="M1335.3 1106.5 L1448.8 1132.5 L1465.0 1122.8 L1543.4 1120.1"/>
<path d="M1465.0 1122.8 L1483.9 1144.4"/>
<path d="M1502.8 895.8 L1481.2 928.2 L1502.8 960.7"/>
<path d="M1532.6 903.9 L1556.9 939.0"/>
<path d="M1411.0 1025.5 L1475.8 1057.9 L1573.1 960.7"/>
<path d="M1319.1 841.8 L1332.6 820.2"/>
<path d="M1343.4 922.8 L1319.1 928.2 L1346.1 936.3"/>
</g>
<path d="M1372 926L1478 1122" stroke="#7aa4e6" stroke-width="1" fill="none"/>
<g id="axes">
<path d="M1339.500 866.500L1336 693" stroke="#22946f" stroke-width="4.600"/>
<path d="M1338.500 866L1335 693" stroke="#3bb48c" stroke-width="1.200" transform="translate(-1.200,0)"/>
<path d="M1335.800 681L1343 694H1328.600Z" fill="#1f8f6a"/>
<path d="M1339.500 866.500L1517 860.800" stroke="#4b3a70" stroke-width="3.800"/>
<path d="M1339.500 865.200L1517 859.500" stroke="#7e6aa6" stroke-width="1"/>
<path d="M1528 861L1515.500 853.500V868Z" fill="#4b3a70"/>
<path d="M1339.500 866.500L1351 845" stroke="#2a4fc0" stroke-width="4.500" stroke-linecap="round"/>
<circle cx="1351" cy="844.500" r="8" fill="#2d58cc"/><circle cx="1349.500" cy="846.500" r="3" fill="#1d3a9a"/>
<text x="1355.500" y="837.500" font-family="Liberation Serif,serif" font-size="11" fill="#1a1af0">Z</text>
<text x="1335" y="661" font-family="Liberation Serif,serif" font-size="11" fill="#25e025">Y</text>
<text x="1546.500" y="857" font-family="Liberation Serif,serif" font-size="11" fill="#f01a1a">X</text>
<path d="M1279 705.700H1296M1279 705.700V720" stroke="#4d84d8" stroke-width="1.600" fill="none"/><path d="M1299.500 705.700L1294 702.500V709Z" fill="#3d6fc4"/>
<path d="M1280 717.5H1297" stroke="#e0567a" stroke-width="3.200"/><path d="M1301.5 717.5L1295.5 713.9V721.1Z" fill="#a83252"/>
<path d="M1280 725.7H1297" stroke="#e0567a" stroke-width="3.200"/><path d="M1301.5 725.7L1295.5 722.1V729.3000000000001Z" fill="#a83252"/>
<path d="M1280 734H1283" stroke="#e0567a" stroke-width="2"/><path d="M1285.500 734L1281.500 731.5V736.5Z" fill="#a83252"/>
<path d="M1280 742H1283" stroke="#e0567a" stroke-width="2"/><path d="M1285.500 742L1281.500 739.5V744.5Z" fill="#a83252"/>
<circle cx="1334.500" cy="877" r="3" fill="none" stroke="#8fb2e8" stroke-width="1.200"/><path d="M1336 880L1342 890" stroke="#8fb2e8" stroke-width="1"/><path d="M1342 888l3 5-5 .5z" fill="#a9c5ee"/>
</g>
<g id="labels" font-size="12" text-anchor="middle" fill="#1a0f2e">
<rect x="1217.1" y="620.6" width="23.3" height="19.8" fill="#ec5c7e" stroke="#000" stroke-width="1.200"/><text x="1228.8" y="634.7">圆3</text>
<rect x="1407.1" y="616.6" width="23.8" height="19.8" fill="#ec5c7e" stroke="#000" stroke-width="1.200"/><text x="1419.0" y="630.7">圆5</text>
<rect x="1559.1" y="707.6" width="23.8" height="19.8" fill="#ec5c7e" stroke="#000" stroke-width="1.200"/><text x="1571.0" y="721.7">圆8</text>
<rect x="1628.1" y="764.1" width="23.8" height="19.3" fill="#6aa5f2" stroke="#000" stroke-width="1.200"/><text x="1640.0" y="778.0">面4</text>
<rect x="1635.6" y="794.6" width="23.8" height="19.8" fill="#ec5c7e" stroke="#000" stroke-width="1.200"/><text x="1647.5" y="808.7">圆9</text>
<rect x="1712.1" y="871.1" width="22.8" height="19.3" fill="#6aa5f2" stroke="#000" stroke-width="1.200"/><text x="1723.5" y="885.0">面5</text>
<rect x="1600.6" y="887.6" width="23.8" height="19.8" fill="#ec5c7e" stroke="#000" stroke-width="1.200"/><text x="1612.5" y="901.7">面1</text>
<rect x="1306.6" y="829.6" width="27.8" height="19.8" fill="#ec5c7e" stroke="#000" stroke-width="1.200"/><text x="1320.5" y="843.7" textLength="23.5" lengthAdjust="spacingAndGlyphs">CIR1</text>
<rect x="1442.1" y="872.1" width="23.8" height="19.3" fill="#ec5c7e" stroke="#000" stroke-width="1.200"/><text x="1454.0" y="886.0">面2</text>
<rect x="1449.6" y="889.1" width="28.8" height="19.3" fill="#ec5c7e" stroke="#000" stroke-width="1.200"/><text x="1464.0" y="903.0" textLength="24.5" lengthAdjust="spacingAndGlyphs">CIR2</text>
<rect x="1489.6" y="880.6" width="28.8" height="19.3" fill="#ec5c7e" stroke="#000" stroke-width="1.200"/><text x="1504.0" y="894.5" textLength="24.5" lengthAdjust="spacingAndGlyphs">圆14</text>
<rect x="1504.1" y="896.6" width="28.8" height="19.3" fill="#ec5c7e" stroke="#000" stroke-width="1.200"/><text x="1518.5" y="910.5" textLength="24.5" lengthAdjust="spacingAndGlyphs">CIR3</text>
<rect x="1488.1" y="962.6" width="23.8" height="17.8" fill="#ec5c7e" stroke="#000" stroke-width="1.200"/><text x="1500.0" y="975.7">面3</text>
<rect x="1480.1999999999998" y="950.6" width="23.20000000000009" height="19.3" fill="#ec5c7e" stroke="#000" stroke-width="1.200"/><text x="1491.8" y="964.5">圆</text>
<rect x="1482.1" y="923.1" width="29.8" height="19.3" fill="#ec5c7e" stroke="#000" stroke-width="1.200"/><text x="1497.0" y="937.0" textLength="25.5" lengthAdjust="spacingAndGlyphs">CIR4</text>
<rect x="1486.6" y="944.6" width="33.8" height="19.3" fill="#ec5c7e" stroke="#000" stroke-width="1.200"/><text x="1503.5" y="958.5" textLength="29.5" lengthAdjust="spacingAndGlyphs">圆柱1</text>
<rect x="1532.1" y="933.6" width="34.8" height="19.8" fill="#ec5c7e" stroke="#000" stroke-width="1.200"/><text x="1549.5" y="947.7">圆柱2</text>
<rect x="1333.1" y="905.6" width="23.8" height="19.3" fill="#ec5c7e" stroke="#000" stroke-width="1.200"/><text x="1345.0" y="919.5">圆1</text>
<rect x="1343.1" y="931.1" width="24.8" height="19.8" fill="#ec5c7e" stroke="#000" stroke-width="1.200"/><text x="1355.5" y="945.2">圆2</text>
<rect x="1251.6" y="931.6" width="28.8" height="20.3" fill="#ec5c7e" stroke="#000" stroke-width="1.200"/><text x="1266.0" y="946.0" textLength="24.5" lengthAdjust="spacingAndGlyphs">圆11</text>
<rect x="1038.1" y="938.6" width="28.8" height="19.8" fill="#ec5c7e" stroke="#000" stroke-width="1.200"/><text x="1052.5" y="952.7" textLength="24.5" lengthAdjust="spacingAndGlyphs">圆12</text>
<rect x="1009.1" y="943.1" width="28.8" height="19.3" fill="#ec5c7e" stroke="#000" stroke-width="1.200"/><text x="1023.5" y="957.0" textLength="24.5" lengthAdjust="spacingAndGlyphs">圆13</text>
<rect x="964.1" y="964.6" width="30.3" height="19.8" fill="#ec5c7e" stroke="#000" stroke-width="1.200"/><text x="979.2" y="978.7" textLength="26.0" lengthAdjust="spacingAndGlyphs">CIR6</text>
<rect x="1294.6" y="1014.6" width="32.3" height="18.8" fill="#ec5c7e" stroke="#000" stroke-width="1.200"/><text x="1310.8" y="1028.2" textLength="28.0" lengthAdjust="spacingAndGlyphs">直线1</text>
<rect x="1291.6" y="1023.1" width="35.3" height="19.3" fill="#ec5c7e" stroke="#000" stroke-width="1.200"/><text x="1309.2" y="1037.0">直线2</text>
<rect x="1290.6" y="1094.6" width="23.8" height="19.8" fill="#ec5c7e" stroke="#000" stroke-width="1.200"/><text x="1302.5" y="1108.7">圆7</text>
<rect x="1446.6" y="1107.1" width="23.8" height="19.8" fill="#ec5c7e" stroke="#000" stroke-width="1.200"/><text x="1458.5" y="1121.2">圆6</text>
<rect x="1540.6" y="1112.1" width="25.3" height="19.3" fill="#ec5c7e" stroke="#000" stroke-width="1.200"/><text x="1553.2" y="1126.0">LN1</text>
<rect x="1464.1" y="1143.1" width="42.8" height="19.3" fill="#ec5c7e" stroke="#000" stroke-width="1.200"/><text x="1485.5" y="1157.0" textLength="38.5" lengthAdjust="spacingAndGlyphs">LN_BF1</text>
<rect x="1646.6" y="1021.6" width="29.3" height="19.3" fill="#ec5c7e" stroke="#000" stroke-width="1.200"/><text x="1661.2" y="1035.5">圆10</text>
</g>
<g id="triad">
<path d="M529.700 1162.700L527.600 1122" stroke="#18b80a" stroke-width="2"/><path d="M526.900 1104L535.200 1123.500Q528 1126 520.800 1123.500Z" fill="#18b80a"/>
<path d="M529.700 1162.700L534 1155" stroke="#8aa8ff" stroke-width="1.500"/><path d="M528 1149L537.600 1140L542 1140.400L546 1148.200L537.600 1158.700L534 1155.200Z" fill="#8aa8ff"/>
<path d="M531 1162.700H571" stroke="#ff5a2a" stroke-width="2"/><path d="M591.800 1162.700L571.500 1155.200Q569 1162.700 571.500 1170.200Z" fill="#ff5a2a"/>
<g font-size="9.500" fill="#e6d600" font-family="Liberation Sans,sans-serif"><text x="529.300" y="1105">Y</text><text x="543.800" y="1140">Z</text><text x="593.500" y="1163">X</text></g>
</g>
</svg>
<div id="edge2" style="position:absolute;left:435px;top:1px;width:1px;height:1256px;background:#686868"></div><div style="position:absolute;left:0;top:1px;width:435px;height:1px;background:#fdfdfd"></div><div style="position:absolute;left:0;top:1256px;width:435px;height:1px;background:#fdfdfd"></div><div id="topline"></div><div id="botline"></div><div style="position:absolute;left:435px;top:0;width:1435px;height:1px;background:#2d3a4d"></div><div style="position:absolute;left:435px;top:1257px;width:1435px;height:1px;background:#2a2f3c"></div>
</body></html>
